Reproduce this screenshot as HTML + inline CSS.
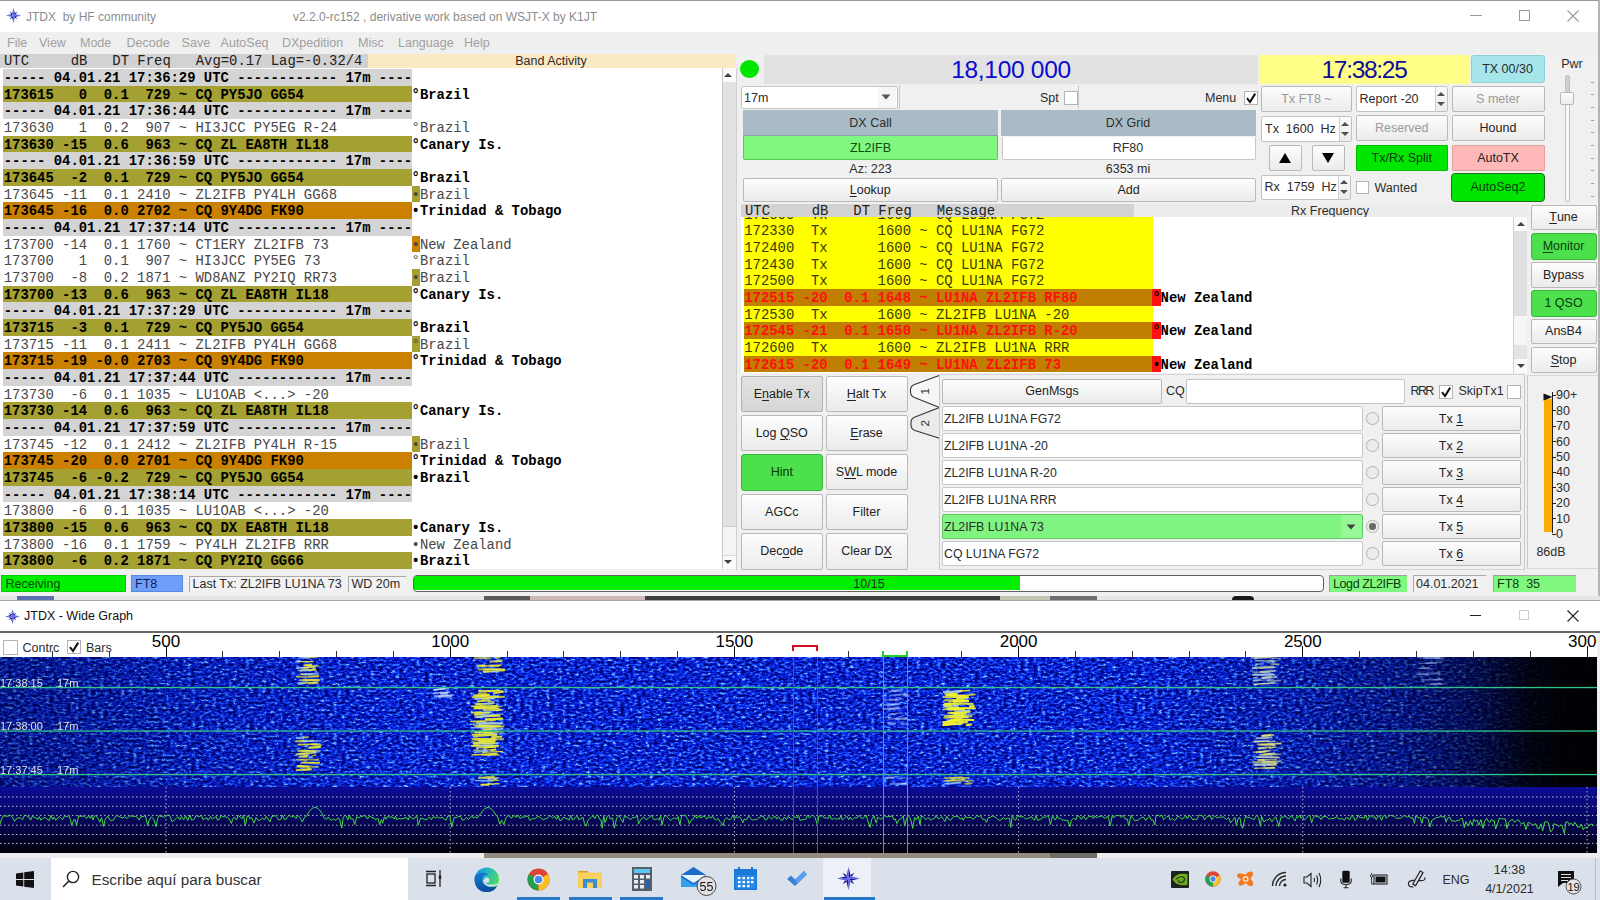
<!DOCTYPE html>
<html><head><meta charset="utf-8"><style>
*{margin:0;padding:0;box-sizing:border-box}
html,body{width:1600px;height:900px;overflow:hidden;background:#fff}
body{position:relative;font-family:"Liberation Sans",sans-serif;font-size:12px;color:#2c2c2c}
div{position:absolute}
.t{white-space:pre;line-height:1;transform:translateY(-50%)}
.tc{white-space:pre;line-height:1;transform:translate(-50%,-50%)}
.mono{font-family:"Liberation Mono",monospace;white-space:pre}
.btn{border:1px solid #b9b9b9;border-radius:2px;background:linear-gradient(#fcfcfc,#ececec);}
.btnl{display:flex;align-items:center;justify-content:center;white-space:pre;font-size:12.5px;color:#2c2c2c}
.edit{background:#fff;border:1px solid #c4c4c4;border-radius:2px}
.u{text-decoration:underline;text-underline-offset:2px}
.chk{background:#fff;border:1px solid #b8b8b8}
</style></head><body>
<div style="left:0px;top:0px;width:1600px;height:596px;background:#f0f0f0"></div>
<div style="left:0px;top:0px;width:1600px;height:1px;background:#9a9a9a"></div>
<div style="left:0px;top:1px;width:1598px;height:31px;background:#fff"></div>
<svg style="position:absolute;left:5.5px;top:8px" width="15" height="15" viewBox="0 0 20 20"><path d="M11.6 7.1 L15 5 L12.9 8.4 Z M12.9 11.6 L15 15 L11.6 12.9 Z M8.4 12.9 L5 15 L7.1 11.6 Z M7.1 8.4 L5 5 L8.4 7.1 Z" fill="#1212a0"/><path d="M10 0 L12 8 L10 10 Z M20 10 L12 12 L10 10 Z M10 20 L8 12 L10 10 Z M0 10 L8 8 L10 10 Z" fill="#1212a0"/><path d="M10 0 L8 8 L10 10 Z M20 10 L12 8 L10 10 Z M10 20 L12 12 L10 10 Z M0 10 L8 12 L10 10 Z" fill="#5a5ae6"/></svg>
<div class="t" style="left:26px;top:16.5px;font-size:12px;color:#8c8c8c">JTDX  by HF community</div>
<div class="t" style="left:293px;top:16.5px;font-size:12px;color:#8c8c8c">v2.2.0-rc152 , derivative work based on WSJT-X by K1JT</div>
<div style="left:1470px;top:15px;width:12px;height:1px;background:#999"></div>
<div style="left:1519px;top:10px;width:11px;height:11px;border:1px solid #999"></div>
<svg style="position:absolute;left:1567px;top:10px" width="12" height="12" viewBox="0 0 12 12"><path d="M0.5 0.5 L11.5 11.5 M11.5 0.5 L0.5 11.5" stroke="#999" stroke-width="1.1"/></svg>
<div style="left:1598px;top:0px;width:2px;height:596px;background:#b4b4b4"></div>
<div style="left:0px;top:32px;width:1598px;height:22px;background:#efefef"></div>
<div class="t" style="left:7px;top:42.5px;font-size:12.5px;color:#a0a0a0">File</div>
<div class="t" style="left:39px;top:42.5px;font-size:12.5px;color:#a0a0a0">View</div>
<div class="t" style="left:80px;top:42.5px;font-size:12.5px;color:#a0a0a0">Mode</div>
<div class="t" style="left:126.6px;top:42.5px;font-size:12.5px;color:#a0a0a0">Decode</div>
<div class="t" style="left:181.6px;top:42.5px;font-size:12.5px;color:#a0a0a0">Save</div>
<div class="t" style="left:220.6px;top:42.5px;font-size:12.5px;color:#a0a0a0">AutoSeq</div>
<div class="t" style="left:282px;top:42.5px;font-size:12.5px;color:#a0a0a0">DXpedition</div>
<div class="t" style="left:358px;top:42.5px;font-size:12.5px;color:#a0a0a0">Misc</div>
<div class="t" style="left:398px;top:42.5px;font-size:12.5px;color:#a0a0a0">Language</div>
<div class="t" style="left:464px;top:42.5px;font-size:12.5px;color:#a0a0a0">Help</div>
<div style="left:0px;top:54px;width:367.5px;height:13.5px;background:#d2d2d2"></div>
<div class="mono" style="left:4px;top:54px;height:14px;line-height:14px;font-size:13.9px;color:#202020">UTC     dB   DT Freq   Avg=0.17 Lag=-0.32/4</div>
<div style="left:367.5px;top:54px;width:368px;height:14px;background:#fbe9c4"></div>
<div class="t" style="left:551px;top:61px;font-size:12.5px;color:#2c2c2c;transform:translate(-50%,-50%)">Band Activity</div>
<div style="left:0px;top:67.5px;width:721.5px;height:501.5px;background:#fff"></div>
<div style="left:3px;top:69.1px;width:408.6px;height:16.67px;background:#d4d4d4"></div>
<div class="mono" style="left:3.75px;top:70.1px;height:16.67px;line-height:16.67px;font-size:13.9px;font-weight:bold;color:#000">----- 04.01.21 17:36:29 UTC ------------ 17m ----</div>
<div style="left:3px;top:85.77px;width:408.6px;height:16.67px;background:#a4a032"></div>
<div class="mono" style="left:3.75px;top:86.77px;height:16.67px;line-height:16.67px;font-size:13.9px;font-weight:bold;color:#000">173615   0  0.1  729 ~ CQ PY5JO GG54             </div>
<div class="mono" style="left:411.6px;top:86.77px;height:16.67px;line-height:16.67px;font-size:13.9px;font-weight:bold;color:#000">°Brazil</div>
<div style="left:3px;top:102.43px;width:408.6px;height:16.67px;background:#d4d4d4"></div>
<div class="mono" style="left:3.75px;top:103.43px;height:16.67px;line-height:16.67px;font-size:13.9px;font-weight:bold;color:#000">----- 04.01.21 17:36:44 UTC ------------ 17m ----</div>
<div class="mono" style="left:3.75px;top:120.1px;height:16.67px;line-height:16.67px;font-size:13.9px;font-weight:normal;color:#484848">173630   1  0.2  907 ~ HI3JCC PY5EG R-24         </div>
<div class="mono" style="left:411.6px;top:120.1px;height:16.67px;line-height:16.67px;font-size:13.9px;font-weight:normal;color:#484848">°Brazil</div>
<div style="left:3px;top:135.77px;width:408.6px;height:16.67px;background:#a4a032"></div>
<div class="mono" style="left:3.75px;top:136.77px;height:16.67px;line-height:16.67px;font-size:13.9px;font-weight:bold;color:#000">173630 -15  0.6  963 ~ CQ ZL EA8TH IL18          </div>
<div class="mono" style="left:411.6px;top:136.77px;height:16.67px;line-height:16.67px;font-size:13.9px;font-weight:bold;color:#000">°Canary Is.</div>
<div style="left:3px;top:152.43px;width:408.6px;height:16.67px;background:#d4d4d4"></div>
<div class="mono" style="left:3.75px;top:153.43px;height:16.67px;line-height:16.67px;font-size:13.9px;font-weight:bold;color:#000">----- 04.01.21 17:36:59 UTC ------------ 17m ----</div>
<div style="left:3px;top:169.1px;width:408.6px;height:16.67px;background:#a4a032"></div>
<div class="mono" style="left:3.75px;top:170.1px;height:16.67px;line-height:16.67px;font-size:13.9px;font-weight:bold;color:#000">173645  -2  0.1  729 ~ CQ PY5JO GG54             </div>
<div class="mono" style="left:411.6px;top:170.1px;height:16.67px;line-height:16.67px;font-size:13.9px;font-weight:bold;color:#000">°Brazil</div>
<div class="mono" style="left:3.75px;top:186.77px;height:16.67px;line-height:16.67px;font-size:13.9px;font-weight:normal;color:#484848">173645 -11  0.1 2410 ~ ZL2IFB PY4LH GG68         </div>
<div style="left:411.6px;top:185.77px;width:8.33px;height:16.67px;background:#a4a032"></div>
<div class="mono" style="left:411.6px;top:186.77px;height:16.67px;line-height:16.67px;font-size:13.9px;font-weight:normal;color:#484848">•Brazil</div>
<div style="left:3px;top:202.43px;width:408.6px;height:16.67px;background:#cc8000"></div>
<div class="mono" style="left:3.75px;top:203.43px;height:16.67px;line-height:16.67px;font-size:13.9px;font-weight:bold;color:#000">173645 -16  0.0 2702 ~ CQ 9Y4DG FK90             </div>
<div class="mono" style="left:411.6px;top:203.43px;height:16.67px;line-height:16.67px;font-size:13.9px;font-weight:bold;color:#000">•Trinidad &amp; Tobago</div>
<div style="left:3px;top:219.1px;width:408.6px;height:16.67px;background:#d4d4d4"></div>
<div class="mono" style="left:3.75px;top:220.1px;height:16.67px;line-height:16.67px;font-size:13.9px;font-weight:bold;color:#000">----- 04.01.21 17:37:14 UTC ------------ 17m ----</div>
<div class="mono" style="left:3.75px;top:236.77px;height:16.67px;line-height:16.67px;font-size:13.9px;font-weight:normal;color:#484848">173700 -14  0.1 1760 ~ CT1ERY ZL2IFB 73          </div>
<div style="left:411.6px;top:235.77px;width:8.33px;height:16.67px;background:#cc8000"></div>
<div class="mono" style="left:411.6px;top:236.77px;height:16.67px;line-height:16.67px;font-size:13.9px;font-weight:normal;color:#484848">•New Zealand</div>
<div class="mono" style="left:3.75px;top:253.43px;height:16.67px;line-height:16.67px;font-size:13.9px;font-weight:normal;color:#484848">173700   1  0.1  907 ~ HI3JCC PY5EG 73           </div>
<div class="mono" style="left:411.6px;top:253.43px;height:16.67px;line-height:16.67px;font-size:13.9px;font-weight:normal;color:#484848">°Brazil</div>
<div class="mono" style="left:3.75px;top:270.1px;height:16.67px;line-height:16.67px;font-size:13.9px;font-weight:normal;color:#484848">173700  -8  0.2 1871 ~ WD8ANZ PY2IQ RR73         </div>
<div style="left:411.6px;top:269.1px;width:8.33px;height:16.67px;background:#a4a032"></div>
<div class="mono" style="left:411.6px;top:270.1px;height:16.67px;line-height:16.67px;font-size:13.9px;font-weight:normal;color:#484848">•Brazil</div>
<div style="left:3px;top:285.77px;width:408.6px;height:16.67px;background:#a4a032"></div>
<div class="mono" style="left:3.75px;top:286.77px;height:16.67px;line-height:16.67px;font-size:13.9px;font-weight:bold;color:#000">173700 -13  0.6  963 ~ CQ ZL EA8TH IL18          </div>
<div class="mono" style="left:411.6px;top:286.77px;height:16.67px;line-height:16.67px;font-size:13.9px;font-weight:bold;color:#000">°Canary Is.</div>
<div style="left:3px;top:302.43px;width:408.6px;height:16.67px;background:#d4d4d4"></div>
<div class="mono" style="left:3.75px;top:303.43px;height:16.67px;line-height:16.67px;font-size:13.9px;font-weight:bold;color:#000">----- 04.01.21 17:37:29 UTC ------------ 17m ----</div>
<div style="left:3px;top:319.1px;width:408.6px;height:16.67px;background:#a4a032"></div>
<div class="mono" style="left:3.75px;top:320.1px;height:16.67px;line-height:16.67px;font-size:13.9px;font-weight:bold;color:#000">173715  -3  0.1  729 ~ CQ PY5JO GG54             </div>
<div class="mono" style="left:411.6px;top:320.1px;height:16.67px;line-height:16.67px;font-size:13.9px;font-weight:bold;color:#000">°Brazil</div>
<div class="mono" style="left:3.75px;top:336.77px;height:16.67px;line-height:16.67px;font-size:13.9px;font-weight:normal;color:#484848">173715 -11  0.1 2411 ~ ZL2IFB PY4LH GG68         </div>
<div style="left:411.6px;top:335.77px;width:8.33px;height:16.67px;background:#a4a032"></div>
<div class="mono" style="left:411.6px;top:336.77px;height:16.67px;line-height:16.67px;font-size:13.9px;font-weight:normal;color:#484848">°Brazil</div>
<div style="left:3px;top:352.43px;width:408.6px;height:16.67px;background:#cc8000"></div>
<div class="mono" style="left:3.75px;top:353.43px;height:16.67px;line-height:16.67px;font-size:13.9px;font-weight:bold;color:#000">173715 -19 -0.0 2703 ~ CQ 9Y4DG FK90             </div>
<div class="mono" style="left:411.6px;top:353.43px;height:16.67px;line-height:16.67px;font-size:13.9px;font-weight:bold;color:#000">°Trinidad &amp; Tobago</div>
<div style="left:3px;top:369.1px;width:408.6px;height:16.67px;background:#d4d4d4"></div>
<div class="mono" style="left:3.75px;top:370.1px;height:16.67px;line-height:16.67px;font-size:13.9px;font-weight:bold;color:#000">----- 04.01.21 17:37:44 UTC ------------ 17m ----</div>
<div class="mono" style="left:3.75px;top:386.77px;height:16.67px;line-height:16.67px;font-size:13.9px;font-weight:normal;color:#484848">173730  -6  0.1 1035 ~ LU1OAB &lt;...&gt; -20          </div>
<div style="left:3px;top:402.43px;width:408.6px;height:16.67px;background:#a4a032"></div>
<div class="mono" style="left:3.75px;top:403.43px;height:16.67px;line-height:16.67px;font-size:13.9px;font-weight:bold;color:#000">173730 -14  0.6  963 ~ CQ ZL EA8TH IL18          </div>
<div class="mono" style="left:411.6px;top:403.43px;height:16.67px;line-height:16.67px;font-size:13.9px;font-weight:bold;color:#000">°Canary Is.</div>
<div style="left:3px;top:419.1px;width:408.6px;height:16.67px;background:#d4d4d4"></div>
<div class="mono" style="left:3.75px;top:420.1px;height:16.67px;line-height:16.67px;font-size:13.9px;font-weight:bold;color:#000">----- 04.01.21 17:37:59 UTC ------------ 17m ----</div>
<div class="mono" style="left:3.75px;top:436.77px;height:16.67px;line-height:16.67px;font-size:13.9px;font-weight:normal;color:#484848">173745 -12  0.1 2412 ~ ZL2IFB PY4LH R-15         </div>
<div style="left:411.6px;top:435.77px;width:8.33px;height:16.67px;background:#a4a032"></div>
<div class="mono" style="left:411.6px;top:436.77px;height:16.67px;line-height:16.67px;font-size:13.9px;font-weight:normal;color:#484848">•Brazil</div>
<div style="left:3px;top:452.43px;width:408.6px;height:16.67px;background:#cc8000"></div>
<div class="mono" style="left:3.75px;top:453.43px;height:16.67px;line-height:16.67px;font-size:13.9px;font-weight:bold;color:#000">173745 -20  0.0 2701 ~ CQ 9Y4DG FK90             </div>
<div class="mono" style="left:411.6px;top:453.43px;height:16.67px;line-height:16.67px;font-size:13.9px;font-weight:bold;color:#000">°Trinidad &amp; Tobago</div>
<div style="left:3px;top:469.1px;width:408.6px;height:16.67px;background:#a4a032"></div>
<div class="mono" style="left:3.75px;top:470.1px;height:16.67px;line-height:16.67px;font-size:13.9px;font-weight:bold;color:#000">173745  -6 -0.2  729 ~ CQ PY5JO GG54             </div>
<div class="mono" style="left:411.6px;top:470.1px;height:16.67px;line-height:16.67px;font-size:13.9px;font-weight:bold;color:#000">•Brazil</div>
<div style="left:3px;top:485.77px;width:408.6px;height:16.67px;background:#d4d4d4"></div>
<div class="mono" style="left:3.75px;top:486.77px;height:16.67px;line-height:16.67px;font-size:13.9px;font-weight:bold;color:#000">----- 04.01.21 17:38:14 UTC ------------ 17m ----</div>
<div class="mono" style="left:3.75px;top:503.43px;height:16.67px;line-height:16.67px;font-size:13.9px;font-weight:normal;color:#484848">173800  -6  0.1 1035 ~ LU1OAB &lt;...&gt; -20          </div>
<div style="left:3px;top:519.1px;width:408.6px;height:16.67px;background:#a4a032"></div>
<div class="mono" style="left:3.75px;top:520.1px;height:16.67px;line-height:16.67px;font-size:13.9px;font-weight:bold;color:#000">173800 -15  0.6  963 ~ CQ DX EA8TH IL18          </div>
<div class="mono" style="left:411.6px;top:520.1px;height:16.67px;line-height:16.67px;font-size:13.9px;font-weight:bold;color:#000">•Canary Is.</div>
<div class="mono" style="left:3.75px;top:536.77px;height:16.67px;line-height:16.67px;font-size:13.9px;font-weight:normal;color:#484848">173800 -16  0.1 1759 ~ PY4LH ZL2IFB RRR          </div>
<div class="mono" style="left:411.6px;top:536.77px;height:16.67px;line-height:16.67px;font-size:13.9px;font-weight:normal;color:#484848">•New Zealand</div>
<div style="left:3px;top:552.43px;width:408.6px;height:16.67px;background:#a4a032"></div>
<div class="mono" style="left:3.75px;top:553.43px;height:16.67px;line-height:16.67px;font-size:13.9px;font-weight:bold;color:#000">173800  -6  0.2 1871 ~ CQ PY2IQ GG66             </div>
<div class="mono" style="left:411.6px;top:553.43px;height:16.67px;line-height:16.67px;font-size:13.9px;font-weight:bold;color:#000">•Brazil</div>
<div style="left:721.5px;top:68px;width:14px;height:501px;background:#e8e8e8;border-left:1px solid #c8c8c8"></div>
<div style="left:722.5px;top:68px;width:13px;height:14px;background:#fafafa"></div>
<div style="left:722.5px;top:82px;width:13px;height:445px;background:#e2e2e2;border-bottom:1px solid #d0d0d0"></div>
<div style="left:722.5px;top:527px;width:13px;height:28px;background:#f4f4f4"></div>
<div style="left:722.5px;top:555px;width:13px;height:14px;background:#fafafa;border-top:1px solid #d8d8d8"></div>
<svg style="position:absolute;left:723px;top:71px" width="10" height="8" viewBox="0 0 10 8"><path d="M1 6 L5 2 L9 6 Z" fill="#444"/></svg>
<svg style="position:absolute;left:723px;top:558px" width="10" height="8" viewBox="0 0 10 8"><path d="M1 2 L5 6 L9 2 Z" fill="#444"/></svg>
<div style="left:735.5px;top:68px;width:1px;height:503px;background:#d0d0d0"></div>
<div style="left:740px;top:60px;width:18.5px;height:18px;background:#00e600;border-radius:50%"></div>
<div style="left:764px;top:54.5px;width:494px;height:29px;background:#e2e2e2"></div>
<div class="t" style="left:1011px;top:70px;font-size:24.5px;color:#0a0ad0;letter-spacing:-0.3px;transform:translate(-50%,-50%)">18,100 000</div>
<div style="left:1260px;top:54.5px;width:208.5px;height:29.5px;background:#ffff88"></div>
<div class="t" style="left:1364px;top:70px;font-size:24.5px;color:#0d0d99;letter-spacing:-1.3px;transform:translate(-50%,-50%)">17:38:25</div>
<div style="left:1470.5px;top:55px;width:74px;height:28px;background:#a6e6ea;border:1px solid #8ccfd6;border-radius:3px;display:flex;align-items:center;justify-content:center;font-size:12.5px;color:#2c2c2c">TX 00/30</div>
<div class="t" style="left:1572px;top:63.5px;font-size:12.5px;color:#2c2c2c;transform:translate(-50%,-50%)">Pwr</div>
<div style="left:1565px;top:75px;width:5px;height:127px;background:#fafafa;border:1px solid #c0c0c0;border-radius:2px"></div>
<div style="left:1566px;top:76px;width:3px;height:16px;background:#cfcfcf"></div>
<div style="left:1560px;top:91.5px;width:14px;height:13px;background:linear-gradient(#fdfdfd,#ececec);border:1px solid #b8b8b8;border-radius:2px"></div>
<div style="left:1591px;top:81.8px;width:3px;height:1px;background:#a0a0a0"></div>
<div style="left:1591px;top:94.45px;width:3px;height:1px;background:#a0a0a0"></div>
<div style="left:1591px;top:107.1px;width:3px;height:1px;background:#a0a0a0"></div>
<div style="left:1591px;top:119.75px;width:3px;height:1px;background:#a0a0a0"></div>
<div style="left:1591px;top:132.4px;width:3px;height:1px;background:#a0a0a0"></div>
<div style="left:1591px;top:145.05px;width:3px;height:1px;background:#a0a0a0"></div>
<div style="left:1591px;top:157.7px;width:3px;height:1px;background:#a0a0a0"></div>
<div style="left:1591px;top:170.35px;width:3px;height:1px;background:#a0a0a0"></div>
<div style="left:1591px;top:183.0px;width:3px;height:1px;background:#a0a0a0"></div>
<div style="left:1591px;top:195.65px;width:3px;height:1px;background:#a0a0a0"></div>
<div style="left:741px;top:86px;width:156.5px;height:22.5px;background:#fff;border:1px solid #c4c4c4;border-radius:2px"></div>
<div style="left:878px;top:87px;width:18px;height:20.5px;background:#f6f6f6"></div>
<div class="t" style="left:744px;top:97.5px;font-size:12.5px;color:#2c2c2c">17m</div>
<svg style="position:absolute;left:881px;top:94px" width="10" height="6" viewBox="0 0 10 6"><path d="M0.5 0.5 L9.5 0.5 L5 5.5 Z" fill="#555"/></svg>
<div style="left:899px;top:85px;width:180px;height:24px;border-left:1px solid #c8c8c8;border-right:1px solid #c8c8c8"></div>
<div class="t" style="left:1040px;top:97.5px;font-size:12.5px;color:#2c2c2c">Spt</div>
<div style="left:1064px;top:90.5px;width:14px;height:14px;background:#fff;border:1px solid #b4b4b4"></div>
<div class="t" style="left:1205px;top:97.5px;font-size:12.5px;color:#2c2c2c">Menu</div>
<div style="left:1244px;top:90.5px;width:14px;height:14px;background:#fff;border:1px solid #b4b4b4"></div>
<svg style="position:absolute;left:1244px;top:90.5px" width="14" height="14" viewBox="0 0 14 14"><path d="M3 7.2 L6 11 L11.2 2.6" fill="none" stroke="#111" stroke-width="2"/></svg>
<div style="left:743px;top:110px;width:255px;height:25.5px;background:#a9bcc6;border-bottom:1px solid #8aa0aa"></div>
<div class="t" style="left:870.5px;top:122.5px;font-size:12.5px;color:#2c2c2c;transform:translate(-50%,-50%)">DX Call</div>
<div style="left:1001px;top:110px;width:255px;height:26px;background:#a9bcc6"></div>
<div class="t" style="left:1128px;top:122.5px;font-size:12.5px;color:#2c2c2c;transform:translate(-50%,-50%)">DX Grid</div>
<div style="left:743px;top:135.5px;width:255px;height:24px;background:#80f880;border:1px solid #5cc85c;border-top:none;border-radius:0 0 2px 2px"></div>
<div class="t" style="left:870.5px;top:148px;font-size:12.5px;color:#0c4c0c;transform:translate(-50%,-50%)">ZL2IFB</div>
<div style="left:1001.5px;top:136.5px;width:254.5px;height:23px;background:#fff;border:1px solid #c8c8c8;border-top:none;border-radius:0 0 2px 2px"></div>
<div class="t" style="left:1128px;top:148px;font-size:12.5px;color:#2c2c2c;transform:translate(-50%,-50%)">RF80</div>
<div class="t" style="left:870.5px;top:169px;font-size:12.5px;color:#2c2c2c;transform:translate(-50%,-50%)">Az: 223</div>
<div class="t" style="left:1128px;top:169px;font-size:12.5px;color:#2c2c2c;transform:translate(-50%,-50%)">6353 mi</div>
<div style="left:742.5px;top:177.5px;width:255.5px;height:24.5px;border:1px solid #b9b9b9;border-radius:2px;background:linear-gradient(#fdfdfd,#ebebeb);display:flex;align-items:center;justify-content:center;white-space:pre;font-size:12.5px;color:#222;"><span class="u">L</span>ookup</div>
<div style="left:1001px;top:177.5px;width:255px;height:24.5px;border:1px solid #b9b9b9;border-radius:2px;background:linear-gradient(#fdfdfd,#ebebeb);display:flex;align-items:center;justify-content:center;white-space:pre;font-size:12.5px;color:#222;">Add</div>
<div style="left:1261px;top:85.5px;width:91px;height:26.5px;border:1px solid #b9b9b9;border-radius:2px;background:linear-gradient(#fdfdfd,#ebebeb);display:flex;align-items:center;justify-content:center;white-space:pre;font-size:12.5px;color:#9a9a9a;">Tx FT8 ~</div>
<div style="left:1355.5px;top:85.5px;width:92.5px;height:26px;background:#fff;border:1px solid #c2c2c2;border-radius:2px"></div>
<div class="t" style="left:1359.5px;top:98.5px;font-size:12.5px;color:#2c2c2c">Report -20</div>
<div style="left:1434.5px;top:86.5px;width:12.5px;height:24px;background:linear-gradient(#fafafa,#ececec);border-left:1px solid #cfcfcf"></div>
<svg style="position:absolute;left:1436.25px;top:90.5px" width="10" height="16" viewBox="0 0 10 16"><path d="M1 5 L5 1 L9 5 Z" fill="#505050"/><path d="M1 11 L5 15 L9 11 Z" fill="#505050"/></svg>
<div style="left:1451.5px;top:85.5px;width:93px;height:26px;border:1px solid #b9b9b9;border-radius:2px;background:linear-gradient(#fdfdfd,#ebebeb);display:flex;align-items:center;justify-content:center;white-space:pre;font-size:12.5px;color:#9a9a9a;">S meter</div>
<div style="left:1261px;top:115.5px;width:91px;height:26px;background:#fff;border:1px solid #c2c2c2;border-radius:2px"></div>
<div class="t" style="left:1265px;top:128.5px;font-size:12.5px;color:#2c2c2c">Tx  1600  Hz</div>
<div style="left:1338.5px;top:116.5px;width:12.5px;height:24px;background:linear-gradient(#fafafa,#ececec);border-left:1px solid #cfcfcf"></div>
<svg style="position:absolute;left:1340.25px;top:120.5px" width="10" height="16" viewBox="0 0 10 16"><path d="M1 5 L5 1 L9 5 Z" fill="#505050"/><path d="M1 11 L5 15 L9 11 Z" fill="#505050"/></svg>
<div style="left:1355.5px;top:115px;width:92.5px;height:26px;border:1px solid #b9b9b9;border-radius:2px;background:linear-gradient(#fdfdfd,#ebebeb);display:flex;align-items:center;justify-content:center;white-space:pre;font-size:12.5px;color:#9a9a9a;">Reserved</div>
<div style="left:1451.5px;top:115px;width:93px;height:26px;border:1px solid #b9b9b9;border-radius:2px;background:linear-gradient(#fdfdfd,#ebebeb);display:flex;align-items:center;justify-content:center;white-space:pre;font-size:12.5px;color:#222;">Hound</div>
<div style="left:1268.5px;top:145px;width:33px;height:26px;border:1px solid #b9b9b9;border-radius:2px;background:linear-gradient(#fdfdfd,#ebebeb);display:flex;align-items:center;justify-content:center;white-space:pre;font-size:12.5px;color:#222;"><svg width="14" height="12" viewBox="0 0 14 12"><path d="M1 11 L7 1 L13 11 Z" fill="#000"/></svg></div>
<div style="left:1312px;top:145px;width:32.5px;height:26px;border:1px solid #b9b9b9;border-radius:2px;background:linear-gradient(#fdfdfd,#ebebeb);display:flex;align-items:center;justify-content:center;white-space:pre;font-size:12.5px;color:#222;"><svg width="14" height="12" viewBox="0 0 14 12"><path d="M1 1 L7 11 L13 1 Z" fill="#000"/></svg></div>
<div style="left:1355.5px;top:144.5px;width:92.5px;height:26.5px;border:1px solid #00c000;border-radius:1px;background:#00e600;display:flex;align-items:center;justify-content:center;white-space:pre;font-size:12.5px;color:#0a3a0a;">Tx/Rx Split</div>
<div style="left:1451.5px;top:144.5px;width:93px;height:26.5px;border:1px solid #e0a0a0;border-radius:1px;background:#ffb8b8;display:flex;align-items:center;justify-content:center;white-space:pre;font-size:12.5px;color:#222;">AutoTX</div>
<div style="left:1260.5px;top:174.5px;width:90.5px;height:25.5px;background:#fff;border:1px solid #c2c2c2;border-radius:2px"></div>
<div class="t" style="left:1264.5px;top:187.25px;font-size:12.5px;color:#2c2c2c">Rx  1759  Hz</div>
<div style="left:1337.5px;top:175.5px;width:12.5px;height:23.5px;background:linear-gradient(#fafafa,#ececec);border-left:1px solid #cfcfcf"></div>
<svg style="position:absolute;left:1339.25px;top:179.25px" width="10" height="16" viewBox="0 0 10 16"><path d="M1 5 L5 1 L9 5 Z" fill="#505050"/><path d="M1 11 L5 15 L9 11 Z" fill="#505050"/></svg>
<div style="left:1355.5px;top:180.5px;width:13.5px;height:13.5px;background:#fff;border:1px solid #b4b4b4"></div>
<div class="t" style="left:1374.5px;top:187.5px;font-size:12.5px;color:#2c2c2c">Wanted</div>
<div style="left:1451px;top:173px;width:94px;height:28.5px;border:1px solid #1f6f1f;border-radius:4px;background:#00e600;display:flex;align-items:center;justify-content:center;white-space:pre;font-size:12.5px;color:#0a3a0a;">AutoSeq2</div>
<div style="left:740.5px;top:204px;width:393px;height:13px;background:#d2d2d2"></div>
<div style="left:1133.5px;top:204px;width:393.5px;height:13px;background:#ececec"></div>
<div class="mono" style="left:745px;top:203.5px;height:14px;line-height:14px;font-size:13.9px;color:#202020">UTC     dB   DT Freq   Message</div>
<div class="t" style="left:1330px;top:210.5px;font-size:12.5px;color:#2c2c2c;transform:translate(-50%,-50%)">Rx Frequency</div>
<div style="left:740.5px;top:217px;width:772.5px;height:156px;background:#fff;overflow:hidden"><div style="left:3.25px;top:-11.4px;width:408.75px;height:16.67px;background:#ffff00"></div>
<div class="mono" style="left:3.75px;top:-10.4px;height:16.67px;line-height:16.67px;font-size:13.9px;color:#3a3a00">172300  Tx      1600 ~ CQ LU1NA FG72             </div>
<div style="left:3.25px;top:5.27px;width:408.75px;height:16.67px;background:#ffff00"></div>
<div class="mono" style="left:3.75px;top:6.27px;height:16.67px;line-height:16.67px;font-size:13.9px;color:#3a3a00">172330  Tx      1600 ~ CQ LU1NA FG72             </div>
<div style="left:3.25px;top:21.93px;width:408.75px;height:16.67px;background:#ffff00"></div>
<div class="mono" style="left:3.75px;top:22.93px;height:16.67px;line-height:16.67px;font-size:13.9px;color:#3a3a00">172400  Tx      1600 ~ CQ LU1NA FG72             </div>
<div style="left:3.25px;top:38.6px;width:408.75px;height:16.67px;background:#ffff00"></div>
<div class="mono" style="left:3.75px;top:39.6px;height:16.67px;line-height:16.67px;font-size:13.9px;color:#3a3a00">172430  Tx      1600 ~ CQ LU1NA FG72             </div>
<div style="left:3.25px;top:55.27px;width:408.75px;height:16.67px;background:#ffff00"></div>
<div class="mono" style="left:3.75px;top:56.27px;height:16.67px;line-height:16.67px;font-size:13.9px;color:#3a3a00">172500  Tx      1600 ~ CQ LU1NA FG72             </div>
<div style="left:3.25px;top:71.93px;width:408.75px;height:16.67px;background:#c07f00"></div>
<div class="mono" style="left:3.75px;top:72.93px;height:16.67px;line-height:16.67px;font-size:13.9px;font-weight:bold;color:#ff1010">172515 -20  0.1 1648 ~ LU1NA ZL2IFB RF80         </div>
<div style="left:411.75px;top:71.93px;width:8.33px;height:16.67px;background:#ff1010"></div>
<div class="mono" style="left:411.75px;top:72.93px;height:16.67px;line-height:16.67px;font-size:13.9px;font-weight:bold;color:#000">°New Zealand</div>
<div style="left:3.25px;top:88.6px;width:408.75px;height:16.67px;background:#ffff00"></div>
<div class="mono" style="left:3.75px;top:89.6px;height:16.67px;line-height:16.67px;font-size:13.9px;color:#3a3a00">172530  Tx      1600 ~ ZL2IFB LU1NA -20          </div>
<div style="left:3.25px;top:105.27px;width:408.75px;height:16.67px;background:#c07f00"></div>
<div class="mono" style="left:3.75px;top:106.27px;height:16.67px;line-height:16.67px;font-size:13.9px;font-weight:bold;color:#ff1010">172545 -21  0.1 1650 ~ LU1NA ZL2IFB R-20         </div>
<div style="left:411.75px;top:105.27px;width:8.33px;height:16.67px;background:#ff1010"></div>
<div class="mono" style="left:411.75px;top:106.27px;height:16.67px;line-height:16.67px;font-size:13.9px;font-weight:bold;color:#000">°New Zealand</div>
<div style="left:3.25px;top:121.93px;width:408.75px;height:16.67px;background:#ffff00"></div>
<div class="mono" style="left:3.75px;top:122.93px;height:16.67px;line-height:16.67px;font-size:13.9px;color:#3a3a00">172600  Tx      1600 ~ ZL2IFB LU1NA RRR          </div>
<div style="left:3.25px;top:138.6px;width:408.75px;height:16.67px;background:#c07f00"></div>
<div class="mono" style="left:3.75px;top:139.6px;height:16.67px;line-height:16.67px;font-size:13.9px;font-weight:bold;color:#ff1010">172615 -20  0.1 1649 ~ LU1NA ZL2IFB 73           </div>
<div style="left:411.75px;top:138.6px;width:8.33px;height:16.67px;background:#ff1010"></div>
<div class="mono" style="left:411.75px;top:139.6px;height:16.67px;line-height:16.67px;font-size:13.9px;font-weight:bold;color:#000">•New Zealand</div>
</div>
<div style="left:1513px;top:217px;width:14px;height:156px;background:#ececec;border-left:1px solid #cfcfcf"></div>
<div style="left:1514px;top:217px;width:13px;height:14px;background:#fafafa"></div>
<div style="left:1514px;top:231px;width:13px;height:85px;background:#e0e0e0"></div>
<div style="left:1514px;top:316px;width:13px;height:29px;background:#f6f6f6"></div>
<div style="left:1514px;top:345px;width:13px;height:14px;background:#e4e4e4"></div>
<div style="left:1514px;top:359px;width:13px;height:14px;background:#fafafa"></div>
<svg style="position:absolute;left:1515.5px;top:220px" width="10" height="8" viewBox="0 0 10 8"><path d="M1 6 L5 2 L9 6 Z" fill="#444"/></svg>
<svg style="position:absolute;left:1515.5px;top:362px" width="10" height="8" viewBox="0 0 10 8"><path d="M1 2 L5 6 L9 2 Z" fill="#444"/></svg>
<div style="left:1530.5px;top:204.5px;width:66px;height:25.5px;border:1px solid #b9b9b9;border-radius:2px;background:linear-gradient(#fdfdfd,#ebebeb);display:flex;align-items:center;justify-content:center;white-space:pre;font-size:12.5px;color:#222;"><span class="u">T</span>une</div>
<div style="left:1530.5px;top:233px;width:66px;height:26.5px;border:1px solid #3ab83a;border-radius:3px;background:#4ce04c;display:flex;align-items:center;justify-content:center;white-space:pre;font-size:12.5px;color:#0a3a0a;"><span class="u">M</span>onitor</div>
<div style="left:1530.5px;top:261.5px;width:66px;height:26px;border:1px solid #b9b9b9;border-radius:2px;background:linear-gradient(#fdfdfd,#ebebeb);display:flex;align-items:center;justify-content:center;white-space:pre;font-size:12.5px;color:#222;">Bypass</div>
<div style="left:1530.5px;top:289.5px;width:66px;height:27px;border:1px solid #3ab83a;border-radius:3px;background:#4ce04c;display:flex;align-items:center;justify-content:center;white-space:pre;font-size:12.5px;color:#0a3a0a;">1 QSO</div>
<div style="left:1530.5px;top:318.5px;width:66px;height:25.5px;border:1px solid #b9b9b9;border-radius:2px;background:linear-gradient(#fdfdfd,#ebebeb);display:flex;align-items:center;justify-content:center;white-space:pre;font-size:12.5px;color:#222;">AnsB4</div>
<div style="left:1530.5px;top:346.5px;width:66px;height:26px;border:1px solid #b9b9b9;border-radius:2px;background:linear-gradient(#fdfdfd,#ebebeb);display:flex;align-items:center;justify-content:center;white-space:pre;font-size:12.5px;color:#222;"><span class="u">S</span>top</div>
<div style="left:740.5px;top:375.5px;width:82.5px;height:36.5px;border:1px solid #b0b0b0;border-radius:2px;background:linear-gradient(#e2e2e2,#d6d6d6);display:flex;align-items:center;justify-content:center;white-space:pre;font-size:12.5px;color:#222;">E<span class="u">n</span>able Tx</div>
<div style="left:825.5px;top:375.5px;width:82px;height:36.5px;border:1px solid #b9b9b9;border-radius:2px;background:linear-gradient(#fdfdfd,#ebebeb);display:flex;align-items:center;justify-content:center;white-space:pre;font-size:12.5px;color:#222;"><span class="u">H</span>alt Tx</div>
<div style="left:740.5px;top:414.5px;width:82.5px;height:36.5px;border:1px solid #b9b9b9;border-radius:2px;background:linear-gradient(#fdfdfd,#ebebeb);display:flex;align-items:center;justify-content:center;white-space:pre;font-size:12.5px;color:#222;">Log <span class="u">Q</span>SO</div>
<div style="left:825.5px;top:414.5px;width:82px;height:36.5px;border:1px solid #b9b9b9;border-radius:2px;background:linear-gradient(#fdfdfd,#ebebeb);display:flex;align-items:center;justify-content:center;white-space:pre;font-size:12.5px;color:#222;"><span class="u">E</span>rase</div>
<div style="left:740.5px;top:453.5px;width:82.5px;height:37.5px;border:1px solid #3ab83a;border-radius:3px;background:#4ce04c;display:flex;align-items:center;justify-content:center;white-space:pre;font-size:12.5px;color:#0a3a0a;">Hint</div>
<div style="left:825.5px;top:453.5px;width:82px;height:36.5px;border:1px solid #b9b9b9;border-radius:2px;background:linear-gradient(#fdfdfd,#ebebeb);display:flex;align-items:center;justify-content:center;white-space:pre;font-size:12.5px;color:#222;">S<span class="u">W</span>L mode</div>
<div style="left:740.5px;top:493.5px;width:82.5px;height:36.5px;border:1px solid #b9b9b9;border-radius:2px;background:linear-gradient(#fdfdfd,#ebebeb);display:flex;align-items:center;justify-content:center;white-space:pre;font-size:12.5px;color:#222;">AGCc</div>
<div style="left:825.5px;top:493.5px;width:82px;height:36.5px;border:1px solid #b9b9b9;border-radius:2px;background:linear-gradient(#fdfdfd,#ebebeb);display:flex;align-items:center;justify-content:center;white-space:pre;font-size:12.5px;color:#222;">Filter</div>
<div style="left:740.5px;top:533px;width:82.5px;height:36.5px;border:1px solid #b9b9b9;border-radius:2px;background:linear-gradient(#fdfdfd,#ebebeb);display:flex;align-items:center;justify-content:center;white-space:pre;font-size:12.5px;color:#222;">Dec<span class="u">o</span>de</div>
<div style="left:825.5px;top:533px;width:82px;height:36.5px;border:1px solid #b9b9b9;border-radius:2px;background:linear-gradient(#fdfdfd,#ebebeb);display:flex;align-items:center;justify-content:center;white-space:pre;font-size:12.5px;color:#222;">Clear D<span class="u">X</span></div>
<svg style="position:absolute;left:908px;top:373px" width="34" height="70" viewBox="0 0 34 70"><path d="M31.2 2.4 L6.5 11.5 Q2.5 13 2.5 17 L2.5 19 Q2.5 23 6.5 24.5 L31.5 34.5 Z" fill="#f6f6f6"/><path d="M31.5 34.5 L7 44 Q3 45.5 3 49.5 L3 52 Q3 56 7 57.5 L31.5 65.3 Z" fill="#ebebeb"/><path d="M31.2 2.4 L6.5 11.5 Q2.5 13 2.5 17 L2.5 19 Q2.5 23 6.5 24.5 L31.5 34.5" fill="none" stroke="#333" stroke-width="1.1"/><path d="M31.5 34.5 L7 44 Q3 45.5 3 49.5 L3 52 Q3 56 7 57.5 L31.5 65.3" fill="none" stroke="#333" stroke-width="1.1"/><text x="17" y="18.3" font-family="Liberation Sans" font-size="11.5" fill="#2c2c2c" transform="rotate(-90 17 18.3)" text-anchor="middle" dominant-baseline="central">1</text><text x="17" y="50.3" font-family="Liberation Sans" font-size="11.5" fill="#2c2c2c" transform="rotate(-90 17 50.3)" text-anchor="middle" dominant-baseline="central">2</text></svg>
<div style="left:938.5px;top:374px;width:586px;height:196px;border-left:1px solid #c8c8c8;border-right:1px solid #c8c8c8;border-top:1px solid #d4d4d4;border-bottom:1px solid #d4d4d4"></div>
<div style="left:942px;top:378.5px;width:220px;height:25px;border:1px solid #b9b9b9;border-radius:2px;background:linear-gradient(#fdfdfd,#ebebeb);display:flex;align-items:center;justify-content:center;white-space:pre;font-size:12.5px;color:#222;">GenMsgs</div>
<div class="t" style="left:1166px;top:391px;font-size:12.5px;color:#2c2c2c">CQ</div>
<div style="left:1186px;top:378.5px;width:218.5px;height:25px;background:#fff;border:1px solid #c4c4c4;border-radius:2px"></div>
<div class="t" style="left:1410.5px;top:391px;font-size:12.5px;color:#2c2c2c;letter-spacing:-1.6px">RRR</div>
<div style="left:1438.5px;top:384.5px;width:14px;height:14px;background:#fff;border:1px solid #b4b4b4"></div>
<svg style="position:absolute;left:1438.5px;top:384.5px" width="14" height="14" viewBox="0 0 14 14"><path d="M3 7.2 L6 11 L11.2 2.6" fill="none" stroke="#111" stroke-width="2"/></svg>
<div class="t" style="left:1458.5px;top:391px;font-size:12.5px;color:#2c2c2c">SkipTx1</div>
<div style="left:1506.5px;top:384.5px;width:14px;height:14px;background:#fff;border:1px solid #b4b4b4"></div>
<div style="left:942px;top:405.75px;width:420.5px;height:25.5px;background:#fff;border:1px solid #c8c8c8;border-radius:2px"></div>
<div class="t" style="left:944px;top:418.75px;font-size:12.3px;color:#2c2c2c">ZL2IFB LU1NA FG72</div>
<div style="left:1366px;top:412.25px;width:12.5px;height:12.5px;background:#ececec;border:1px solid #b4b4b4;border-radius:50%"></div>
<div style="left:1381.5px;top:405.75px;width:139px;height:25.5px;border:1px solid #b9b9b9;border-radius:2px;background:linear-gradient(#fdfdfd,#ebebeb);display:flex;align-items:center;justify-content:center;white-space:pre;font-size:12.5px;color:#222;">Tx <span class="u">1</span></div>
<div style="left:942px;top:432.75px;width:420.5px;height:25.5px;background:#fff;border:1px solid #c8c8c8;border-radius:2px"></div>
<div class="t" style="left:944px;top:445.75px;font-size:12.3px;color:#2c2c2c">ZL2IFB LU1NA -20</div>
<div style="left:1366px;top:439.25px;width:12.5px;height:12.5px;background:#ececec;border:1px solid #b4b4b4;border-radius:50%"></div>
<div style="left:1381.5px;top:432.75px;width:139px;height:25.5px;border:1px solid #b9b9b9;border-radius:2px;background:linear-gradient(#fdfdfd,#ebebeb);display:flex;align-items:center;justify-content:center;white-space:pre;font-size:12.5px;color:#222;">Tx <span class="u">2</span></div>
<div style="left:942px;top:459.75px;width:420.5px;height:25.5px;background:#fff;border:1px solid #c8c8c8;border-radius:2px"></div>
<div class="t" style="left:944px;top:472.75px;font-size:12.3px;color:#2c2c2c">ZL2IFB LU1NA R-20</div>
<div style="left:1366px;top:466.25px;width:12.5px;height:12.5px;background:#ececec;border:1px solid #b4b4b4;border-radius:50%"></div>
<div style="left:1381.5px;top:459.75px;width:139px;height:25.5px;border:1px solid #b9b9b9;border-radius:2px;background:linear-gradient(#fdfdfd,#ebebeb);display:flex;align-items:center;justify-content:center;white-space:pre;font-size:12.5px;color:#222;">Tx <span class="u">3</span></div>
<div style="left:942px;top:486.75px;width:420.5px;height:25.5px;background:#fff;border:1px solid #c8c8c8;border-radius:2px"></div>
<div class="t" style="left:944px;top:499.75px;font-size:12.3px;color:#2c2c2c">ZL2IFB LU1NA RRR</div>
<div style="left:1366px;top:493.25px;width:12.5px;height:12.5px;background:#ececec;border:1px solid #b4b4b4;border-radius:50%"></div>
<div style="left:1381.5px;top:486.75px;width:139px;height:25.5px;border:1px solid #b9b9b9;border-radius:2px;background:linear-gradient(#fdfdfd,#ebebeb);display:flex;align-items:center;justify-content:center;white-space:pre;font-size:12.5px;color:#222;">Tx <span class="u">4</span></div>
<div style="left:942px;top:513.75px;width:420.5px;height:25.5px;background:#80f480;border:1px solid #60c860;border-radius:2px"></div>
<div style="left:1341px;top:514.75px;width:20.5px;height:23.5px;background:#98f898"></div>
<svg style="position:absolute;left:1346px;top:523.75px" width="10" height="6" viewBox="0 0 10 6"><path d="M0.5 0.5 L9.5 0.5 L5 5.5 Z" fill="#444"/></svg>
<div class="t" style="left:944px;top:526.75px;font-size:12.3px;color:#2c2c2c">ZL2IFB LU1NA 73</div>
<div style="left:1366px;top:520.25px;width:12.5px;height:12.5px;background:#ececec;border:1px solid #b4b4b4;border-radius:50%"></div>
<div style="left:1369px;top:523.25px;width:6.5px;height:6.5px;background:#6a6a6a;border-radius:50%"></div>
<div style="left:1381.5px;top:513.75px;width:139px;height:25.5px;border:1px solid #b9b9b9;border-radius:2px;background:linear-gradient(#fdfdfd,#ebebeb);display:flex;align-items:center;justify-content:center;white-space:pre;font-size:12.5px;color:#222;">Tx <span class="u">5</span></div>
<div style="left:942px;top:540.75px;width:420.5px;height:25.5px;background:#fff;border:1px solid #c8c8c8;border-radius:2px"></div>
<div class="t" style="left:944px;top:553.75px;font-size:12.3px;color:#2c2c2c">CQ LU1NA FG72</div>
<div style="left:1366px;top:547.25px;width:12.5px;height:12.5px;background:#ececec;border:1px solid #b4b4b4;border-radius:50%"></div>
<div style="left:1381.5px;top:540.75px;width:139px;height:25.5px;border:1px solid #b9b9b9;border-radius:2px;background:linear-gradient(#fdfdfd,#ebebeb);display:flex;align-items:center;justify-content:center;white-space:pre;font-size:12.5px;color:#222;">Tx <span class="u">6</span></div>
<div style="left:1526.5px;top:375px;width:71.5px;height:193.5px;border-left:1px solid #c8c8c8;border-top:1px solid #d8d8d8;border-bottom:1px solid #d8d8d8"></div>
<div style="left:1543.5px;top:398.5px;width:8.5px;height:133px;background:#ffaa00"></div>
<svg style="position:absolute;left:1543px;top:393px" width="10" height="8" viewBox="0 0 10 8"><path d="M0.5 0.5 L9.5 4 L0.5 7.5 Z" fill="#111"/></svg>
<div style="left:1552px;top:391.5px;width:1px;height:141px;background:#222"></div>
<div style="left:1552px;top:394.8px;width:4px;height:1px;background:#222"></div>
<div class="t" style="left:1556px;top:395.3px;font-size:12.5px;color:#2c2c2c">90+</div>
<div style="left:1552px;top:410.23px;width:4px;height:1px;background:#222"></div>
<div class="t" style="left:1556px;top:410.73px;font-size:12.5px;color:#2c2c2c">80</div>
<div style="left:1552px;top:425.66px;width:4px;height:1px;background:#222"></div>
<div class="t" style="left:1556px;top:426.16px;font-size:12.5px;color:#2c2c2c">70</div>
<div style="left:1552px;top:441.09000000000003px;width:4px;height:1px;background:#222"></div>
<div class="t" style="left:1556px;top:441.59000000000003px;font-size:12.5px;color:#2c2c2c">60</div>
<div style="left:1552px;top:456.52px;width:4px;height:1px;background:#222"></div>
<div class="t" style="left:1556px;top:457.02px;font-size:12.5px;color:#2c2c2c">50</div>
<div style="left:1552px;top:471.95000000000005px;width:4px;height:1px;background:#222"></div>
<div class="t" style="left:1556px;top:472.45000000000005px;font-size:12.5px;color:#2c2c2c">40</div>
<div style="left:1552px;top:487.38px;width:4px;height:1px;background:#222"></div>
<div class="t" style="left:1556px;top:487.88px;font-size:12.5px;color:#2c2c2c">30</div>
<div style="left:1552px;top:502.81px;width:4px;height:1px;background:#222"></div>
<div class="t" style="left:1556px;top:503.31px;font-size:12.5px;color:#2c2c2c">20</div>
<div style="left:1552px;top:518.24px;width:4px;height:1px;background:#222"></div>
<div class="t" style="left:1556px;top:518.74px;font-size:12.5px;color:#2c2c2c">10</div>
<div style="left:1552px;top:533.6700000000001px;width:4px;height:1px;background:#222"></div>
<div class="t" style="left:1556px;top:534.1700000000001px;font-size:12.5px;color:#2c2c2c">0</div>
<div class="t" style="left:1551px;top:552px;font-size:12.5px;color:#2c2c2c;transform:translate(-50%,-50%)">86dB</div>
<div style="left:1px;top:574.5px;width:125px;height:17.5px;background:#00f000;border:1px solid #00d000"></div>
<div class="t" style="left:5.5px;top:583.5px;font-size:12.5px;color:#0a4a0a">Receiving</div>
<div style="left:131px;top:574.5px;width:52px;height:17.5px;background:#6f9ef8;border:1px solid #5a88e0"></div>
<div class="t" style="left:135px;top:583.5px;font-size:12.5px;color:#10205a">FT8</div>
<div style="left:189px;top:575.5px;width:152px;height:16.5px;background:#f2f2f2;border-left:1px solid #aaa;border-top:1px solid #aaa"></div>
<div class="t" style="left:192.5px;top:583.5px;font-size:12.5px;color:#2c2c2c">Last Tx: ZL2IFB LU1NA 73</div>
<div style="left:347.5px;top:575.5px;width:58px;height:16.5px;background:#f2f2f2;border-left:1px solid #aaa;border-top:1px solid #aaa"></div>
<div class="t" style="left:351.5px;top:583.5px;font-size:12.5px;color:#2c2c2c">WD 20m</div>
<div style="left:412.5px;top:574.5px;width:911px;height:17px;background:#fff;border:1.5px solid #606060;border-radius:4px;overflow:hidden"><div style="left:0;top:0;width:606px;height:14px;background:#00ee00"></div></div>
<div class="t" style="left:869px;top:583.5px;font-size:12.5px;color:#2c2c2c;transform:translate(-50%,-50%)">10/15</div>
<div style="left:1329px;top:574.5px;width:78px;height:17px;background:#80f880;border-left:1px solid #a0a0a0;border-top:1px solid #a0a0a0"></div>
<div class="t" style="left:1333px;top:583.5px;font-size:12.5px;color:#0a3a0a;letter-spacing:-0.4px">Logd ZL2IFB</div>
<div style="left:1412.5px;top:575px;width:73px;height:16.5px;background:#f2f2f2;border-left:1px solid #aaa;border-top:1px solid #aaa"></div>
<div class="t" style="left:1416px;top:583.5px;font-size:12.5px;color:#2c2c2c">04.01.2021</div>
<div style="left:1493px;top:574.5px;width:82.5px;height:17px;background:#80f880;border-left:1px solid #a0a0a0;border-top:1px solid #a0a0a0"></div>
<div class="t" style="left:1497px;top:583.5px;font-size:12.5px;color:#0a3a0a">FT8  35</div>
<div style="left:0px;top:596px;width:1600px;height:4px;background:#e6e6e6"></div>
<div style="left:17px;top:596px;width:37px;height:4px;background:#5a70b0"></div>
<div style="left:484px;top:596px;width:46px;height:4px;background:#5a5a5a"></div>
<div style="left:530px;top:596px;width:115px;height:4px;background:#d0b8b8"></div>
<div style="left:645px;top:596px;width:355px;height:4px;background:#3e3e3e"></div>
<div style="left:1000px;top:596px;width:50px;height:4px;background:#c4c4b4"></div>
<div style="left:1050px;top:596px;width:47px;height:4px;background:#6e6e6e"></div>
<div style="left:1232px;top:596px;width:22px;height:4px;background:#1a1a1a;border-radius:11px 11px 0 0"></div>
<div style="left:0px;top:599.5px;width:1600px;height:1px;background:#a8a8a8"></div>
<div style="left:0px;top:600.5px;width:1600px;height:30.5px;background:#fff"></div>
<svg style="position:absolute;left:4.5px;top:608.5px" width="15" height="15" viewBox="0 0 20 20"><path d="M11.6 7.1 L15 5 L12.9 8.4 Z M12.9 11.6 L15 15 L11.6 12.9 Z M8.4 12.9 L5 15 L7.1 11.6 Z M7.1 8.4 L5 5 L8.4 7.1 Z" fill="#1212a0"/><path d="M10 0 L12 8 L10 10 Z M20 10 L12 12 L10 10 Z M10 20 L8 12 L10 10 Z M0 10 L8 8 L10 10 Z" fill="#1212a0"/><path d="M10 0 L8 8 L10 10 Z M20 10 L12 8 L10 10 Z M10 20 L12 12 L10 10 Z M0 10 L8 12 L10 10 Z" fill="#5a5ae6"/></svg>
<div class="t" style="left:24px;top:616px;font-size:12.5px;color:#111">JTDX - Wide Graph</div>
<div style="left:1470px;top:615px;width:11px;height:1px;background:#222"></div>
<div style="left:1519px;top:610px;width:10px;height:10px;border:1px solid #ccc"></div>
<svg style="position:absolute;left:1567px;top:610px" width="12" height="12" viewBox="0 0 12 12"><path d="M0.5 0.5 L11.5 11.5 M11.5 0.5 L0.5 11.5" stroke="#222" stroke-width="1.1"/></svg>
<div style="left:0px;top:631px;width:1600px;height:2px;background:#6a6a6a"></div>
<div style="left:0px;top:633px;width:1600px;height:24px;background:#fff"></div>
<div style="left:51.82px;top:651px;width:1px;height:6px;background:#333"></div>
<div style="left:108.66px;top:651px;width:1px;height:6px;background:#333"></div>
<div style="left:165.5px;top:646px;width:1.2px;height:11px;background:#111"></div>
<div class="t" style="left:166.0px;top:641px;font-size:17px;color:#000;transform:translate(-50%,-50%)">500</div>
<div style="left:222.34px;top:651px;width:1px;height:6px;background:#333"></div>
<div style="left:279.18px;top:651px;width:1px;height:6px;background:#333"></div>
<div style="left:336.02px;top:651px;width:1px;height:6px;background:#333"></div>
<div style="left:392.86px;top:651px;width:1px;height:6px;background:#333"></div>
<div style="left:449.7px;top:646px;width:1.2px;height:11px;background:#111"></div>
<div class="t" style="left:450.2px;top:641px;font-size:17px;color:#000;transform:translate(-50%,-50%)">1000</div>
<div style="left:506.54px;top:651px;width:1px;height:6px;background:#333"></div>
<div style="left:563.38px;top:651px;width:1px;height:6px;background:#333"></div>
<div style="left:620.22px;top:651px;width:1px;height:6px;background:#333"></div>
<div style="left:677.06px;top:651px;width:1px;height:6px;background:#333"></div>
<div style="left:733.9px;top:646px;width:1.2px;height:11px;background:#111"></div>
<div class="t" style="left:734.4px;top:641px;font-size:17px;color:#000;transform:translate(-50%,-50%)">1500</div>
<div style="left:847.58px;top:651px;width:1px;height:6px;background:#333"></div>
<div style="left:961.26px;top:651px;width:1px;height:6px;background:#333"></div>
<div style="left:1018.1px;top:646px;width:1.2px;height:11px;background:#111"></div>
<div class="t" style="left:1018.6px;top:641px;font-size:17px;color:#000;transform:translate(-50%,-50%)">2000</div>
<div style="left:1074.94px;top:651px;width:1px;height:6px;background:#333"></div>
<div style="left:1131.78px;top:651px;width:1px;height:6px;background:#333"></div>
<div style="left:1188.62px;top:651px;width:1px;height:6px;background:#333"></div>
<div style="left:1245.46px;top:651px;width:1px;height:6px;background:#333"></div>
<div style="left:1302.3px;top:646px;width:1.2px;height:11px;background:#111"></div>
<div class="t" style="left:1302.8px;top:641px;font-size:17px;color:#000;transform:translate(-50%,-50%)">2500</div>
<div style="left:1359.14px;top:651px;width:1px;height:6px;background:#333"></div>
<div style="left:1415.98px;top:651px;width:1px;height:6px;background:#333"></div>
<div style="left:1472.82px;top:651px;width:1px;height:6px;background:#333"></div>
<div style="left:1529.66px;top:651px;width:1px;height:6px;background:#333"></div>
<div style="left:1586.5px;top:646px;width:1.2px;height:11px;background:#111"></div>
<div class="t" style="left:1587.0px;top:641px;font-size:17px;color:#000;transform:translate(-50%,-50%)">3000</div>
<div style="left:1597px;top:633px;width:3px;height:24px;background:#fff"></div>
<div style="left:3px;top:640px;width:14.5px;height:14.5px;background:#fff;border:1px solid #b4b4b4"></div>
<div class="t" style="left:22.5px;top:647.5px;font-size:12.5px;color:#2c2c2c">Contrc</div>
<div style="left:67px;top:640px;width:14px;height:14px;background:#fff;border:1px solid #b4b4b4"></div>
<svg style="position:absolute;left:67px;top:640px" width="14" height="14" viewBox="0 0 14 14"><path d="M3 7.2 L6 11 L11.2 2.6" fill="none" stroke="#111" stroke-width="2"/></svg>
<div class="t" style="left:86px;top:647.5px;font-size:12.5px;color:#2c2c2c">Bars</div>
<div style="left:792px;top:644.5px;width:26px;height:2.5px;background:#d01020"></div>
<div style="left:792px;top:644.5px;width:2px;height:6px;background:#d01020"></div>
<div style="left:816px;top:644.5px;width:2px;height:6px;background:#d01020"></div>
<div style="left:882px;top:654.5px;width:26px;height:2.5px;background:#20d020"></div>
<div style="left:882px;top:651px;width:2px;height:6px;background:#20d020"></div>
<div style="left:906px;top:651px;width:2px;height:6px;background:#20d020"></div>
<svg style="position:absolute;left:0;top:657px" width="1600" height="130" viewBox="0 0 1600 130"><defs>
<linearGradient id="wfdark" x1="0" x2="1600" y1="0" y2="0" gradientUnits="userSpaceOnUse">
<stop offset="0" stop-color="#000010" stop-opacity="0.34"/>
<stop offset="0.05" stop-color="#000010" stop-opacity="0.27"/>
<stop offset="0.12" stop-color="#000010" stop-opacity="0.12"/>
<stop offset="0.25" stop-color="#000010" stop-opacity="0.0"/>
<stop offset="0.72" stop-color="#000010" stop-opacity="0.0"/>
<stop offset="0.81" stop-color="#000010" stop-opacity="0.18"/>
<stop offset="0.875" stop-color="#000010" stop-opacity="0.38"/>
<stop offset="0.92" stop-color="#000008" stop-opacity="0.62"/>
<stop offset="0.955" stop-color="#000000" stop-opacity="0.90"/>
<stop offset="0.975" stop-color="#000000" stop-opacity="0.97"/>
<stop offset="1" stop-color="#000000" stop-opacity="0.98"/>
</linearGradient>
<filter id="wfn" x="0" y="0" width="100%" height="100%" color-interpolation-filters="sRGB">
<feTurbulence type="fractalNoise" baseFrequency="0.24 0.42" numOctaves="3" seed="11" result="n"/>
<feColorMatrix in="n" type="matrix" values="1.9 0 0 0 -0.53  1.9 0 0 0 -0.53  1.9 0 0 0 -0.53  0 0 0 0 1" result="g"/>
<feComponentTransfer in="g">
<feFuncR type="table" tableValues="0 0 0.01 0.02 0.03 0.05 0.08 0.12 0.20 0.32 0.55"/>
<feFuncG type="table" tableValues="0.02 0.03 0.05 0.08 0.12 0.18 0.25 0.34 0.46 0.60 0.80"/>
<feFuncB type="table" tableValues="0.40 0.50 0.62 0.73 0.83 0.90 0.96 1 1 1 1"/>
</feComponentTransfer>
</filter>
<filter id="sblur" x="-10%" y="-10%" width="120%" height="120%"><feGaussianBlur stdDeviation="0.45"/></filter>
</defs><rect width="1600" height="130" fill="#1038c0"/><rect width="1600" height="130" filter="url(#wfn)"/><rect width="1600" height="130" fill="url(#wfdark)"/><g filter="url(#sblur)"><line x1="305.7" y1="1.0" x2="319.4" y2="-0.5" stroke="#e4e438" stroke-width="1.7" opacity="0.79"/><line x1="298.4" y1="1.0" x2="309.2" y2="0.5" stroke="#9cc8ff" stroke-width="1.7" opacity="0.78"/><line x1="298.0" y1="4.6" x2="313.6" y2="4.7" stroke="#e4e438" stroke-width="1.3" opacity="0.92"/><line x1="295.5" y1="4.6" x2="301.0" y2="4.2" stroke="#9cc8ff" stroke-width="1.7" opacity="0.86"/><line x1="305.7" y1="8.5" x2="318.7" y2="9.0" stroke="#e4e438" stroke-width="1.7" opacity="0.72"/><line x1="303.6" y1="8.5" x2="311.9" y2="7.6" stroke="#e4e438" stroke-width="2.1" opacity="0.93"/><line x1="301.7" y1="11.0" x2="308.5" y2="10.9" stroke="#e4e438" stroke-width="1.7" opacity="0.80"/><line x1="296.5" y1="11.0" x2="315.4" y2="10.0" stroke="#9cc8ff" stroke-width="1.7" opacity="0.90"/><line x1="303.4" y1="11.0" x2="316.1" y2="9.4" stroke="#e4e438" stroke-width="1.7" opacity="0.77"/><line x1="308.7" y1="13.5" x2="315.0" y2="12.1" stroke="#e4e438" stroke-width="1.7" opacity="0.76"/><line x1="300.1" y1="13.5" x2="316.3" y2="12.6" stroke="#e4e438" stroke-width="2.1" opacity="0.83"/><line x1="297.7" y1="13.5" x2="308.7" y2="13.0" stroke="#9cc8ff" stroke-width="1.3" opacity="0.81"/><line x1="300.4" y1="17.3" x2="311.6" y2="17.5" stroke="#e4e438" stroke-width="1.7" opacity="0.85"/><line x1="304.3" y1="17.3" x2="318.6" y2="16.5" stroke="#9cc8ff" stroke-width="2.1" opacity="0.80"/><line x1="295.9" y1="19.7" x2="307.4" y2="20.1" stroke="#e4e438" stroke-width="1.3" opacity="0.93"/><line x1="307.8" y1="19.7" x2="319.1" y2="19.1" stroke="#e4e438" stroke-width="2.1" opacity="0.84"/><line x1="305.3" y1="23.1" x2="319.5" y2="22.9" stroke="#e4e438" stroke-width="1.3" opacity="0.91"/><line x1="302.8" y1="23.1" x2="320.0" y2="23.3" stroke="#e4e438" stroke-width="2.1" opacity="0.67"/><line x1="299.0" y1="23.1" x2="317.2" y2="23.1" stroke="#e4e438" stroke-width="1.7" opacity="0.68"/><line x1="297.9" y1="26.4" x2="307.4" y2="25.4" stroke="#9cc8ff" stroke-width="2.1" opacity="0.73"/><line x1="300.1" y1="26.4" x2="315.9" y2="25.5" stroke="#e4e438" stroke-width="1.3" opacity="0.74"/><line x1="308.3" y1="26.4" x2="318.6" y2="25.4" stroke="#e4e438" stroke-width="2.1" opacity="0.80"/><line x1="302.4" y1="81.0" x2="308.8" y2="79.8" stroke="#e4e438" stroke-width="1.7" opacity="0.73"/><line x1="295.7" y1="81.0" x2="303.9" y2="80.9" stroke="#9cc8ff" stroke-width="2.1" opacity="0.77"/><line x1="301.1" y1="84.5" x2="314.4" y2="83.5" stroke="#e4e438" stroke-width="1.3" opacity="0.76"/><line x1="302.1" y1="84.5" x2="321.3" y2="83.8" stroke="#9cc8ff" stroke-width="1.3" opacity="0.82"/><line x1="295.4" y1="84.5" x2="304.0" y2="83.6" stroke="#e4e438" stroke-width="2.1" opacity="0.76"/><line x1="298.0" y1="87.7" x2="318.2" y2="87.0" stroke="#e4e438" stroke-width="1.7" opacity="0.89"/><line x1="311.3" y1="87.7" x2="321.7" y2="88.2" stroke="#e4e438" stroke-width="1.7" opacity="0.86"/><line x1="308.4" y1="90.7" x2="320.9" y2="90.2" stroke="#e4e438" stroke-width="1.7" opacity="0.85"/><line x1="308.6" y1="90.7" x2="320.5" y2="89.9" stroke="#e4e438" stroke-width="2.1" opacity="0.87"/><line x1="301.2" y1="93.8" x2="320.6" y2="94.1" stroke="#9cc8ff" stroke-width="2.1" opacity="0.73"/><line x1="297.5" y1="93.8" x2="316.4" y2="94.3" stroke="#e4e438" stroke-width="2.1" opacity="0.82"/><line x1="298.6" y1="97.0" x2="308.3" y2="96.5" stroke="#9cc8ff" stroke-width="2.1" opacity="0.91"/><line x1="298.4" y1="97.0" x2="315.4" y2="95.4" stroke="#e4e438" stroke-width="2.1" opacity="0.68"/><line x1="295.6" y1="97.0" x2="309.4" y2="96.7" stroke="#e4e438" stroke-width="1.3" opacity="0.88"/><line x1="298.8" y1="99.5" x2="307.6" y2="99.8" stroke="#e4e438" stroke-width="2.1" opacity="0.88"/><line x1="302.6" y1="99.5" x2="308.5" y2="98.4" stroke="#e4e438" stroke-width="1.3" opacity="0.94"/><line x1="310.8" y1="99.5" x2="316.2" y2="97.9" stroke="#e4e438" stroke-width="1.3" opacity="0.87"/><line x1="295.7" y1="102.6" x2="306.6" y2="103.2" stroke="#e4e438" stroke-width="1.3" opacity="0.65"/><line x1="299.8" y1="102.6" x2="319.1" y2="102.7" stroke="#e4e438" stroke-width="1.7" opacity="0.66"/><line x1="301.2" y1="105.7" x2="320.0" y2="105.9" stroke="#e4e438" stroke-width="1.7" opacity="0.94"/><line x1="309.1" y1="105.7" x2="315.6" y2="105.9" stroke="#e4e438" stroke-width="1.3" opacity="0.81"/><line x1="297.0" y1="109.3" x2="309.9" y2="109.8" stroke="#e4e438" stroke-width="2.1" opacity="0.94"/><line x1="303.4" y1="109.3" x2="318.4" y2="109.8" stroke="#e4e438" stroke-width="1.7" opacity="0.66"/><line x1="296.9" y1="109.3" x2="304.3" y2="109.1" stroke="#e4e438" stroke-width="2.1" opacity="0.93"/><line x1="295.8" y1="113.3" x2="311.7" y2="111.8" stroke="#e4e438" stroke-width="2.1" opacity="0.86"/><line x1="302.7" y1="113.3" x2="311.6" y2="112.8" stroke="#e4e438" stroke-width="1.3" opacity="0.77"/><line x1="474.1" y1="1.0" x2="490.8" y2="1.4" stroke="#e4e438" stroke-width="2.1" opacity="0.67"/><line x1="495.2" y1="1.0" x2="500.5" y2="-0.0" stroke="#e4e438" stroke-width="2.1" opacity="0.79"/><line x1="489.4" y1="4.7" x2="502.2" y2="3.6" stroke="#e4e438" stroke-width="2.1" opacity="0.77"/><line x1="493.5" y1="4.7" x2="498.8" y2="3.5" stroke="#9cc8ff" stroke-width="1.3" opacity="0.74"/><line x1="495.7" y1="4.7" x2="501.3" y2="4.2" stroke="#e4e438" stroke-width="1.7" opacity="0.86"/><line x1="479.9" y1="8.6" x2="499.2" y2="9.1" stroke="#e4e438" stroke-width="1.7" opacity="0.68"/><line x1="477.5" y1="8.6" x2="485.2" y2="9.1" stroke="#e4e438" stroke-width="2.1" opacity="0.91"/><line x1="488.4" y1="8.6" x2="501.7" y2="8.2" stroke="#e4e438" stroke-width="1.7" opacity="0.83"/><line x1="483.0" y1="12.4" x2="504.9" y2="12.3" stroke="#e4e438" stroke-width="1.7" opacity="0.94"/><line x1="477.8" y1="12.4" x2="500.6" y2="12.4" stroke="#e4e438" stroke-width="2.1" opacity="0.73"/><line x1="483.0" y1="14.9" x2="504.9" y2="13.5" stroke="#e4e438" stroke-width="1.7" opacity="0.92"/><line x1="483.8" y1="14.9" x2="489.2" y2="14.2" stroke="#e4e438" stroke-width="2.1" opacity="0.83"/><line x1="491.5" y1="14.9" x2="497.4" y2="14.0" stroke="#9cc8ff" stroke-width="1.7" opacity="0.80"/><line x1="487.0" y1="34.0" x2="498.4" y2="33.5" stroke="#e8e834" stroke-width="1.3" opacity="0.81"/><line x1="478.4" y1="34.0" x2="502.9" y2="34.1" stroke="#e8e834" stroke-width="2.1" opacity="0.80"/><line x1="493.0" y1="36.4" x2="503.6" y2="34.9" stroke="#e8e834" stroke-width="1.7" opacity="0.93"/><line x1="478.0" y1="36.4" x2="487.1" y2="36.2" stroke="#e8e834" stroke-width="1.7" opacity="0.71"/><line x1="473.4" y1="38.6" x2="489.2" y2="38.1" stroke="#e8e834" stroke-width="2.1" opacity="0.95"/><line x1="478.7" y1="38.6" x2="483.9" y2="38.6" stroke="#e8e834" stroke-width="2.1" opacity="0.74"/><line x1="476.1" y1="38.6" x2="490.1" y2="38.0" stroke="#e8e834" stroke-width="1.7" opacity="0.94"/><line x1="490.1" y1="40.2" x2="504.9" y2="39.7" stroke="#e8e834" stroke-width="2.1" opacity="0.79"/><line x1="471.7" y1="40.2" x2="497.9" y2="39.5" stroke="#e8e834" stroke-width="2.1" opacity="0.82"/><line x1="474.5" y1="41.9" x2="495.4" y2="41.5" stroke="#9cc8ff" stroke-width="1.3" opacity="0.95"/><line x1="474.1" y1="41.9" x2="494.2" y2="41.6" stroke="#9cc8ff" stroke-width="1.3" opacity="0.79"/><line x1="482.0" y1="41.9" x2="490.8" y2="40.4" stroke="#e8e834" stroke-width="1.7" opacity="0.91"/><line x1="477.4" y1="44.5" x2="489.3" y2="43.2" stroke="#e8e834" stroke-width="2.1" opacity="0.90"/><line x1="487.5" y1="44.5" x2="494.2" y2="44.9" stroke="#e8e834" stroke-width="1.7" opacity="0.80"/><line x1="476.5" y1="47.1" x2="493.7" y2="46.5" stroke="#e8e834" stroke-width="1.7" opacity="1.00"/><line x1="477.8" y1="47.1" x2="495.0" y2="46.0" stroke="#9cc8ff" stroke-width="1.3" opacity="0.70"/><line x1="474.9" y1="47.1" x2="481.0" y2="47.0" stroke="#e8e834" stroke-width="1.3" opacity="0.85"/><line x1="471.1" y1="49.3" x2="497.3" y2="48.9" stroke="#e8e834" stroke-width="1.7" opacity="0.89"/><line x1="475.2" y1="49.3" x2="484.5" y2="48.7" stroke="#e8e834" stroke-width="1.3" opacity="0.82"/><line x1="492.0" y1="49.3" x2="502.3" y2="49.5" stroke="#e8e834" stroke-width="1.3" opacity="0.69"/><line x1="475.7" y1="51.1" x2="497.1" y2="50.1" stroke="#e8e834" stroke-width="1.7" opacity="0.86"/><line x1="473.6" y1="51.1" x2="499.7" y2="51.5" stroke="#e8e834" stroke-width="2.1" opacity="0.92"/><line x1="489.4" y1="53.2" x2="503.5" y2="52.8" stroke="#9cc8ff" stroke-width="1.3" opacity="0.79"/><line x1="482.8" y1="53.2" x2="501.8" y2="53.0" stroke="#e8e834" stroke-width="2.1" opacity="0.75"/><line x1="478.9" y1="55.6" x2="491.1" y2="55.1" stroke="#9cc8ff" stroke-width="1.7" opacity="0.99"/><line x1="470.7" y1="55.6" x2="489.9" y2="56.0" stroke="#e8e834" stroke-width="1.7" opacity="0.89"/><line x1="474.8" y1="55.6" x2="481.1" y2="55.4" stroke="#e8e834" stroke-width="2.1" opacity="0.81"/><line x1="474.0" y1="57.6" x2="483.5" y2="57.3" stroke="#e8e834" stroke-width="1.7" opacity="0.94"/><line x1="481.7" y1="57.6" x2="503.4" y2="57.2" stroke="#9cc8ff" stroke-width="1.3" opacity="0.73"/><line x1="474.6" y1="59.8" x2="499.1" y2="58.3" stroke="#e8e834" stroke-width="1.3" opacity="0.84"/><line x1="477.1" y1="59.8" x2="500.4" y2="58.5" stroke="#e8e834" stroke-width="2.1" opacity="0.97"/><line x1="478.2" y1="59.8" x2="489.5" y2="58.3" stroke="#9cc8ff" stroke-width="1.7" opacity="0.80"/><line x1="486.5" y1="62.2" x2="499.8" y2="62.5" stroke="#e8e834" stroke-width="1.3" opacity="0.72"/><line x1="484.9" y1="62.2" x2="503.1" y2="61.7" stroke="#e8e834" stroke-width="2.1" opacity="0.93"/><line x1="495.2" y1="62.2" x2="501.6" y2="61.0" stroke="#e8e834" stroke-width="1.7" opacity="0.82"/><line x1="473.6" y1="64.6" x2="486.5" y2="64.6" stroke="#e8e834" stroke-width="1.7" opacity="0.76"/><line x1="470.0" y1="64.6" x2="495.7" y2="63.4" stroke="#e8e834" stroke-width="1.3" opacity="0.85"/><line x1="479.8" y1="66.7" x2="496.0" y2="66.0" stroke="#e8e834" stroke-width="1.3" opacity="0.92"/><line x1="475.7" y1="66.7" x2="501.6" y2="66.6" stroke="#e8e834" stroke-width="1.7" opacity="0.85"/><line x1="478.4" y1="66.7" x2="502.7" y2="66.3" stroke="#9cc8ff" stroke-width="2.1" opacity="0.93"/><line x1="475.5" y1="68.9" x2="488.8" y2="68.6" stroke="#9cc8ff" stroke-width="1.7" opacity="0.72"/><line x1="474.1" y1="68.9" x2="480.8" y2="69.1" stroke="#e8e834" stroke-width="1.7" opacity="0.74"/><line x1="478.9" y1="68.9" x2="500.7" y2="69.3" stroke="#e8e834" stroke-width="2.1" opacity="0.98"/><line x1="476.9" y1="70.6" x2="488.9" y2="69.1" stroke="#e8e834" stroke-width="1.3" opacity="0.93"/><line x1="482.2" y1="70.6" x2="504.4" y2="69.4" stroke="#e8e834" stroke-width="1.7" opacity="0.89"/><line x1="470.7" y1="70.6" x2="496.8" y2="71.1" stroke="#9cc8ff" stroke-width="1.3" opacity="0.89"/><line x1="484.0" y1="72.9" x2="502.2" y2="72.0" stroke="#9cc8ff" stroke-width="1.7" opacity="0.96"/><line x1="482.2" y1="72.9" x2="492.3" y2="71.8" stroke="#e8e834" stroke-width="2.1" opacity="0.79"/><line x1="474.4" y1="75.1" x2="498.5" y2="74.4" stroke="#e8e834" stroke-width="1.7" opacity="0.82"/><line x1="474.4" y1="75.1" x2="491.9" y2="75.5" stroke="#e8e834" stroke-width="2.1" opacity="0.88"/><line x1="491.2" y1="75.1" x2="503.9" y2="74.9" stroke="#e8e834" stroke-width="1.3" opacity="0.83"/><line x1="475.4" y1="77.8" x2="493.2" y2="76.4" stroke="#e8e834" stroke-width="1.3" opacity="0.88"/><line x1="482.0" y1="77.8" x2="497.1" y2="76.3" stroke="#9cc8ff" stroke-width="1.3" opacity="0.78"/><line x1="471.6" y1="77.8" x2="496.8" y2="77.9" stroke="#e8e834" stroke-width="2.1" opacity="0.91"/><line x1="473.0" y1="79.9" x2="489.1" y2="78.5" stroke="#e8e834" stroke-width="1.7" opacity="0.71"/><line x1="491.3" y1="79.9" x2="502.1" y2="79.7" stroke="#e8e834" stroke-width="2.1" opacity="0.90"/><line x1="478.6" y1="82.2" x2="503.8" y2="82.2" stroke="#e8e834" stroke-width="2.1" opacity="0.68"/><line x1="471.8" y1="82.2" x2="495.5" y2="81.6" stroke="#e8e834" stroke-width="1.7" opacity="0.84"/><line x1="474.8" y1="82.2" x2="481.2" y2="82.6" stroke="#e8e834" stroke-width="1.7" opacity="0.85"/><line x1="478.9" y1="84.1" x2="490.9" y2="83.4" stroke="#e8e834" stroke-width="2.1" opacity="0.69"/><line x1="471.5" y1="84.1" x2="496.9" y2="82.8" stroke="#e8e834" stroke-width="1.3" opacity="0.76"/><line x1="478.7" y1="84.1" x2="495.5" y2="84.1" stroke="#e8e834" stroke-width="1.7" opacity="1.00"/><line x1="473.9" y1="86.4" x2="486.1" y2="86.0" stroke="#e8e834" stroke-width="1.7" opacity="0.88"/><line x1="473.2" y1="86.4" x2="497.6" y2="86.2" stroke="#9cc8ff" stroke-width="2.1" opacity="0.91"/><line x1="472.7" y1="86.4" x2="495.1" y2="86.1" stroke="#e8e834" stroke-width="2.1" opacity="0.78"/><line x1="471.1" y1="89.0" x2="493.2" y2="87.9" stroke="#e8e834" stroke-width="1.3" opacity="0.89"/><line x1="479.2" y1="89.0" x2="499.0" y2="88.5" stroke="#9cc8ff" stroke-width="1.7" opacity="0.97"/><line x1="471.1" y1="89.0" x2="479.9" y2="88.5" stroke="#e8e834" stroke-width="2.1" opacity="0.76"/><line x1="483.8" y1="90.7" x2="495.9" y2="89.4" stroke="#e8e834" stroke-width="2.1" opacity="0.99"/><line x1="476.3" y1="90.7" x2="498.9" y2="89.1" stroke="#e8e834" stroke-width="2.1" opacity="0.77"/><line x1="490.8" y1="93.3" x2="496.0" y2="92.2" stroke="#e8e834" stroke-width="2.1" opacity="0.92"/><line x1="473.8" y1="93.3" x2="496.1" y2="92.6" stroke="#e8e834" stroke-width="1.3" opacity="0.74"/><line x1="482.1" y1="95.4" x2="503.1" y2="94.4" stroke="#e8e834" stroke-width="1.3" opacity="0.90"/><line x1="473.6" y1="95.4" x2="487.9" y2="93.8" stroke="#9cc8ff" stroke-width="1.7" opacity="0.79"/><line x1="484.4" y1="98.0" x2="496.2" y2="96.9" stroke="#e8e834" stroke-width="1.3" opacity="0.81"/><line x1="481.5" y1="98.0" x2="499.5" y2="97.8" stroke="#e8e834" stroke-width="1.7" opacity="0.71"/><line x1="471.5" y1="98.0" x2="497.5" y2="96.6" stroke="#e8e834" stroke-width="1.7" opacity="0.89"/><line x1="482.8" y1="121.0" x2="498.0" y2="121.5" stroke="#e4e438" stroke-width="2.1" opacity="0.66"/><line x1="487.8" y1="121.0" x2="499.2" y2="120.8" stroke="#9cc8ff" stroke-width="1.3" opacity="0.76"/><line x1="478.1" y1="121.0" x2="495.0" y2="119.6" stroke="#e4e438" stroke-width="2.1" opacity="0.72"/><line x1="489.2" y1="123.7" x2="496.4" y2="122.4" stroke="#e4e438" stroke-width="1.3" opacity="0.69"/><line x1="475.0" y1="123.7" x2="493.4" y2="123.8" stroke="#9cc8ff" stroke-width="1.3" opacity="0.91"/><line x1="490.4" y1="123.7" x2="499.4" y2="123.3" stroke="#e4e438" stroke-width="1.3" opacity="0.70"/><line x1="481.0" y1="127.7" x2="499.3" y2="126.7" stroke="#e4e438" stroke-width="1.3" opacity="0.93"/><line x1="480.4" y1="127.7" x2="489.1" y2="127.9" stroke="#e4e438" stroke-width="2.1" opacity="0.85"/><line x1="433.7" y1="33.0" x2="445.7" y2="31.4" stroke="#d8e8ff" stroke-width="1.7" opacity="0.75"/><line x1="433.3" y1="33.0" x2="449.0" y2="31.4" stroke="#d8e8ff" stroke-width="1.3" opacity="0.70"/><line x1="440.1" y1="36.4" x2="447.9" y2="36.6" stroke="#d8e8ff" stroke-width="2.1" opacity="0.68"/><line x1="432.9" y1="36.4" x2="450.2" y2="35.0" stroke="#d8e8ff" stroke-width="1.7" opacity="0.63"/><line x1="438.6" y1="39.2" x2="453.8" y2="37.8" stroke="#d8e8ff" stroke-width="1.3" opacity="0.72"/><line x1="433.8" y1="39.2" x2="452.0" y2="39.4" stroke="#d8e8ff" stroke-width="2.1" opacity="0.67"/><line x1="945.8" y1="35.0" x2="970.2" y2="33.5" stroke="#f0f030" stroke-width="1.3" opacity="0.87"/><line x1="956.1" y1="35.0" x2="962.3" y2="33.5" stroke="#f0f030" stroke-width="1.3" opacity="0.83"/><line x1="943.0" y1="35.0" x2="959.3" y2="34.6" stroke="#9cc8ff" stroke-width="2.1" opacity="0.96"/><line x1="948.2" y1="37.0" x2="954.2" y2="36.6" stroke="#f0f030" stroke-width="1.7" opacity="0.80"/><line x1="950.2" y1="37.0" x2="957.6" y2="37.1" stroke="#f0f030" stroke-width="2.1" opacity="0.94"/><line x1="944.5" y1="37.0" x2="953.3" y2="36.9" stroke="#f0f030" stroke-width="2.1" opacity="0.82"/><line x1="948.1" y1="38.7" x2="969.0" y2="39.1" stroke="#f0f030" stroke-width="1.3" opacity="1.02"/><line x1="945.6" y1="38.7" x2="964.9" y2="38.3" stroke="#f0f030" stroke-width="1.7" opacity="1.00"/><line x1="964.6" y1="38.7" x2="975.5" y2="37.3" stroke="#f0f030" stroke-width="1.7" opacity="0.80"/><line x1="942.7" y1="40.2" x2="967.4" y2="39.9" stroke="#f0f030" stroke-width="1.7" opacity="0.86"/><line x1="952.8" y1="40.2" x2="965.0" y2="40.4" stroke="#f0f030" stroke-width="1.3" opacity="1.07"/><line x1="961.5" y1="41.8" x2="967.7" y2="41.6" stroke="#9cc8ff" stroke-width="1.7" opacity="0.85"/><line x1="956.1" y1="41.8" x2="969.0" y2="40.2" stroke="#f0f030" stroke-width="1.3" opacity="0.96"/><line x1="943.7" y1="43.3" x2="964.5" y2="42.3" stroke="#f0f030" stroke-width="1.7" opacity="0.78"/><line x1="952.9" y1="43.3" x2="967.1" y2="43.7" stroke="#f0f030" stroke-width="2.1" opacity="0.84"/><line x1="947.7" y1="44.8" x2="966.7" y2="43.7" stroke="#f0f030" stroke-width="1.3" opacity="0.83"/><line x1="953.7" y1="44.8" x2="963.5" y2="44.5" stroke="#f0f030" stroke-width="1.3" opacity="0.80"/><line x1="953.0" y1="44.8" x2="969.0" y2="43.9" stroke="#f0f030" stroke-width="2.1" opacity="1.08"/><line x1="959.1" y1="46.5" x2="973.5" y2="47.0" stroke="#f0f030" stroke-width="2.1" opacity="0.88"/><line x1="944.2" y1="46.5" x2="957.3" y2="46.3" stroke="#f0f030" stroke-width="1.3" opacity="1.09"/><line x1="943.2" y1="48.0" x2="955.1" y2="46.4" stroke="#f0f030" stroke-width="1.3" opacity="1.07"/><line x1="943.2" y1="48.0" x2="960.7" y2="46.9" stroke="#f0f030" stroke-width="2.1" opacity="0.83"/><line x1="944.2" y1="49.5" x2="958.9" y2="48.9" stroke="#9cc8ff" stroke-width="1.7" opacity="0.91"/><line x1="944.8" y1="49.5" x2="951.5" y2="48.6" stroke="#f0f030" stroke-width="2.1" opacity="0.80"/><line x1="969.1" y1="49.5" x2="974.6" y2="49.0" stroke="#f0f030" stroke-width="2.1" opacity="1.06"/><line x1="949.7" y1="51.2" x2="974.8" y2="51.2" stroke="#f0f030" stroke-width="1.7" opacity="1.06"/><line x1="946.8" y1="51.2" x2="959.1" y2="50.8" stroke="#f0f030" stroke-width="2.1" opacity="0.82"/><line x1="954.2" y1="51.2" x2="975.8" y2="51.5" stroke="#f0f030" stroke-width="1.7" opacity="1.00"/><line x1="942.6" y1="52.6" x2="954.9" y2="51.0" stroke="#f0f030" stroke-width="1.7" opacity="0.81"/><line x1="947.7" y1="52.6" x2="965.1" y2="52.7" stroke="#f0f030" stroke-width="1.7" opacity="1.08"/><line x1="946.7" y1="52.6" x2="959.2" y2="51.5" stroke="#f0f030" stroke-width="1.3" opacity="0.91"/><line x1="954.5" y1="54.5" x2="969.3" y2="54.7" stroke="#f0f030" stroke-width="2.1" opacity="0.79"/><line x1="957.0" y1="54.5" x2="969.9" y2="53.4" stroke="#9cc8ff" stroke-width="1.7" opacity="1.02"/><line x1="956.5" y1="56.0" x2="971.0" y2="54.6" stroke="#f0f030" stroke-width="1.3" opacity="0.76"/><line x1="949.9" y1="56.0" x2="967.0" y2="55.8" stroke="#f0f030" stroke-width="2.1" opacity="1.09"/><line x1="947.4" y1="56.0" x2="965.9" y2="55.6" stroke="#f0f030" stroke-width="1.3" opacity="1.02"/><line x1="959.0" y1="57.7" x2="974.8" y2="57.1" stroke="#9cc8ff" stroke-width="1.3" opacity="0.76"/><line x1="954.3" y1="57.7" x2="963.7" y2="57.8" stroke="#f0f030" stroke-width="2.1" opacity="0.89"/><line x1="949.0" y1="59.0" x2="972.4" y2="59.2" stroke="#f0f030" stroke-width="2.1" opacity="0.79"/><line x1="955.2" y1="59.0" x2="963.3" y2="59.3" stroke="#f0f030" stroke-width="2.1" opacity="0.75"/><line x1="944.2" y1="59.0" x2="965.6" y2="58.4" stroke="#f0f030" stroke-width="2.1" opacity="0.77"/><line x1="943.4" y1="60.7" x2="964.4" y2="60.3" stroke="#f0f030" stroke-width="1.7" opacity="0.76"/><line x1="954.2" y1="60.7" x2="961.2" y2="59.1" stroke="#9cc8ff" stroke-width="1.3" opacity="0.90"/><line x1="950.3" y1="60.7" x2="967.9" y2="60.2" stroke="#f0f030" stroke-width="1.7" opacity="0.92"/><line x1="954.9" y1="62.5" x2="974.2" y2="63.0" stroke="#f0f030" stroke-width="2.1" opacity="1.06"/><line x1="953.1" y1="62.5" x2="962.3" y2="61.8" stroke="#f0f030" stroke-width="1.7" opacity="0.77"/><line x1="949.5" y1="63.9" x2="958.8" y2="62.5" stroke="#f0f030" stroke-width="2.1" opacity="0.97"/><line x1="947.4" y1="63.9" x2="959.9" y2="62.6" stroke="#f0f030" stroke-width="2.1" opacity="1.08"/><line x1="959.1" y1="65.3" x2="967.5" y2="64.2" stroke="#f0f030" stroke-width="2.1" opacity="0.89"/><line x1="949.3" y1="65.3" x2="962.9" y2="63.9" stroke="#f0f030" stroke-width="1.7" opacity="0.94"/><line x1="942.4" y1="65.3" x2="956.4" y2="64.5" stroke="#f0f030" stroke-width="2.1" opacity="1.08"/><line x1="943.0" y1="66.6" x2="967.9" y2="65.5" stroke="#f0f030" stroke-width="1.3" opacity="0.84"/><line x1="953.1" y1="66.6" x2="960.8" y2="67.0" stroke="#f0f030" stroke-width="1.7" opacity="0.89"/><line x1="943.3" y1="68.1" x2="962.7" y2="66.7" stroke="#f0f030" stroke-width="1.7" opacity="1.06"/><line x1="942.4" y1="68.1" x2="952.9" y2="66.7" stroke="#f0f030" stroke-width="2.1" opacity="1.04"/><line x1="965.8" y1="68.1" x2="972.2" y2="67.5" stroke="#f0f030" stroke-width="2.1" opacity="0.89"/><line x1="950.0" y1="121.0" x2="962.6" y2="119.8" stroke="#e4e438" stroke-width="1.3" opacity="0.72"/><line x1="943.8" y1="121.0" x2="969.3" y2="120.8" stroke="#e4e438" stroke-width="1.7" opacity="0.77"/><line x1="948.4" y1="123.9" x2="955.2" y2="122.3" stroke="#e4e438" stroke-width="1.7" opacity="0.79"/><line x1="949.5" y1="123.9" x2="973.2" y2="123.8" stroke="#e4e438" stroke-width="1.3" opacity="0.77"/><line x1="943.3" y1="123.9" x2="965.3" y2="122.4" stroke="#e4e438" stroke-width="1.3" opacity="0.80"/><line x1="944.4" y1="126.9" x2="961.3" y2="125.4" stroke="#9cc8ff" stroke-width="1.7" opacity="0.86"/><line x1="964.3" y1="126.9" x2="972.4" y2="126.3" stroke="#e4e438" stroke-width="1.7" opacity="0.74"/><line x1="1254.1" y1="1.0" x2="1270.8" y2="-0.2" stroke="#d8e8b0" stroke-width="1.7" opacity="0.60"/><line x1="1250.8" y1="1.0" x2="1272.9" y2="0.6" stroke="#d8e8b0" stroke-width="1.3" opacity="0.65"/><line x1="1272.5" y1="1.0" x2="1280.7" y2="1.5" stroke="#d8e8b0" stroke-width="1.3" opacity="0.54"/><line x1="1254.7" y1="3.8" x2="1274.4" y2="3.8" stroke="#d8e8b0" stroke-width="1.7" opacity="0.53"/><line x1="1268.0" y1="3.8" x2="1277.3" y2="4.2" stroke="#d8e8b0" stroke-width="1.3" opacity="0.58"/><line x1="1270.6" y1="7.0" x2="1279.4" y2="7.4" stroke="#d8e8b0" stroke-width="1.7" opacity="0.68"/><line x1="1255.8" y1="7.0" x2="1263.4" y2="7.1" stroke="#9cc8ff" stroke-width="2.1" opacity="0.49"/><line x1="1252.0" y1="11.1" x2="1274.0" y2="9.6" stroke="#d8e8b0" stroke-width="2.1" opacity="0.69"/><line x1="1260.0" y1="11.1" x2="1274.5" y2="10.7" stroke="#d8e8b0" stroke-width="1.3" opacity="0.58"/><line x1="1252.0" y1="15.0" x2="1270.3" y2="15.5" stroke="#d8e8b0" stroke-width="1.3" opacity="0.50"/><line x1="1260.0" y1="15.0" x2="1275.5" y2="13.7" stroke="#d8e8b0" stroke-width="2.1" opacity="0.71"/><line x1="1252.1" y1="17.8" x2="1275.2" y2="17.6" stroke="#d8e8b0" stroke-width="1.7" opacity="0.68"/><line x1="1259.7" y1="17.8" x2="1274.6" y2="17.7" stroke="#9cc8ff" stroke-width="1.3" opacity="0.68"/><line x1="1257.2" y1="17.8" x2="1273.3" y2="17.1" stroke="#9cc8ff" stroke-width="2.1" opacity="0.66"/><line x1="1253.0" y1="21.1" x2="1258.0" y2="20.0" stroke="#d8e8b0" stroke-width="1.3" opacity="0.56"/><line x1="1261.2" y1="21.1" x2="1271.6" y2="19.7" stroke="#d8e8b0" stroke-width="2.1" opacity="0.67"/><line x1="1262.5" y1="21.1" x2="1276.9" y2="20.1" stroke="#d8e8b0" stroke-width="1.7" opacity="0.63"/><line x1="1266.5" y1="23.9" x2="1281.2" y2="23.5" stroke="#d8e8b0" stroke-width="1.7" opacity="0.53"/><line x1="1252.8" y1="23.9" x2="1273.9" y2="22.4" stroke="#9cc8ff" stroke-width="1.3" opacity="0.55"/><line x1="1252.9" y1="23.9" x2="1261.0" y2="22.6" stroke="#d8e8b0" stroke-width="1.7" opacity="0.53"/><line x1="1253.1" y1="27.3" x2="1276.4" y2="26.0" stroke="#d8e8b0" stroke-width="1.3" opacity="0.70"/><line x1="1253.8" y1="27.3" x2="1273.0" y2="25.9" stroke="#d8e8b0" stroke-width="1.3" opacity="0.65"/><line x1="1260.9" y1="79.0" x2="1274.0" y2="77.9" stroke="#e8e870" stroke-width="1.7" opacity="0.76"/><line x1="1262.5" y1="79.0" x2="1270.5" y2="78.1" stroke="#e8e870" stroke-width="2.1" opacity="0.85"/><line x1="1255.9" y1="81.3" x2="1272.4" y2="80.4" stroke="#e8e870" stroke-width="1.7" opacity="0.63"/><line x1="1257.7" y1="81.3" x2="1268.5" y2="80.7" stroke="#9cc8ff" stroke-width="1.3" opacity="0.85"/><line x1="1253.8" y1="84.7" x2="1269.8" y2="83.5" stroke="#9cc8ff" stroke-width="2.1" opacity="0.68"/><line x1="1253.1" y1="84.7" x2="1275.2" y2="84.3" stroke="#e8e870" stroke-width="1.3" opacity="0.76"/><line x1="1260.7" y1="87.5" x2="1281.7" y2="86.4" stroke="#e8e870" stroke-width="1.7" opacity="0.81"/><line x1="1257.7" y1="87.5" x2="1275.2" y2="87.8" stroke="#e8e870" stroke-width="2.1" opacity="0.84"/><line x1="1269.3" y1="91.3" x2="1276.4" y2="89.9" stroke="#e8e870" stroke-width="1.3" opacity="0.84"/><line x1="1257.8" y1="91.3" x2="1271.0" y2="90.3" stroke="#e8e870" stroke-width="2.1" opacity="0.73"/><line x1="1253.0" y1="95.1" x2="1266.7" y2="94.9" stroke="#e8e870" stroke-width="1.3" opacity="0.71"/><line x1="1258.9" y1="95.1" x2="1270.5" y2="93.5" stroke="#e8e870" stroke-width="1.7" opacity="0.83"/><line x1="1255.9" y1="95.1" x2="1265.5" y2="94.4" stroke="#e8e870" stroke-width="1.7" opacity="0.77"/><line x1="1260.3" y1="97.8" x2="1275.2" y2="96.3" stroke="#e8e870" stroke-width="1.7" opacity="0.83"/><line x1="1263.2" y1="97.8" x2="1270.8" y2="96.9" stroke="#e8e870" stroke-width="2.1" opacity="0.63"/><line x1="1268.0" y1="97.8" x2="1281.4" y2="97.1" stroke="#e8e870" stroke-width="1.3" opacity="0.70"/><line x1="1252.7" y1="100.1" x2="1259.5" y2="99.5" stroke="#9cc8ff" stroke-width="1.7" opacity="0.62"/><line x1="1258.2" y1="100.1" x2="1279.6" y2="100.5" stroke="#e8e870" stroke-width="1.7" opacity="0.83"/><line x1="1255.8" y1="100.1" x2="1274.1" y2="99.9" stroke="#9cc8ff" stroke-width="1.3" opacity="0.78"/><line x1="1259.0" y1="102.9" x2="1277.0" y2="102.6" stroke="#e8e870" stroke-width="1.7" opacity="0.59"/><line x1="1257.3" y1="102.9" x2="1264.6" y2="103.2" stroke="#e8e870" stroke-width="1.7" opacity="0.82"/><line x1="1252.4" y1="105.3" x2="1276.0" y2="105.1" stroke="#e8e870" stroke-width="2.1" opacity="0.69"/><line x1="1261.9" y1="105.3" x2="1281.8" y2="104.1" stroke="#e8e870" stroke-width="1.7" opacity="0.64"/><line x1="1254.7" y1="107.7" x2="1276.6" y2="107.7" stroke="#e8e870" stroke-width="2.1" opacity="0.78"/><line x1="1263.8" y1="107.7" x2="1277.3" y2="106.5" stroke="#e8e870" stroke-width="1.3" opacity="0.75"/><line x1="1253.2" y1="107.7" x2="1270.1" y2="107.4" stroke="#9cc8ff" stroke-width="2.1" opacity="0.64"/><line x1="1253.9" y1="111.3" x2="1274.6" y2="110.5" stroke="#e8e870" stroke-width="1.3" opacity="0.75"/><line x1="1265.0" y1="111.3" x2="1275.4" y2="110.8" stroke="#e8e870" stroke-width="1.7" opacity="0.69"/><line x1="1423.4" y1="1.0" x2="1443.6" y2="1.1" stroke="#a8c8ff" stroke-width="2.1" opacity="0.35"/><line x1="1420.2" y1="1.0" x2="1439.3" y2="0.8" stroke="#a8c8ff" stroke-width="1.7" opacity="0.37"/><line x1="1434.0" y1="1.0" x2="1440.5" y2="0.9" stroke="#a8c8ff" stroke-width="1.7" opacity="0.47"/><line x1="1426.7" y1="6.4" x2="1442.6" y2="5.0" stroke="#a8c8ff" stroke-width="1.3" opacity="0.41"/><line x1="1418.7" y1="6.4" x2="1437.3" y2="6.1" stroke="#a8c8ff" stroke-width="1.3" opacity="0.42"/><line x1="1419.7" y1="11.4" x2="1432.7" y2="12.0" stroke="#9cc8ff" stroke-width="1.3" opacity="0.43"/><line x1="1419.5" y1="11.4" x2="1430.0" y2="10.5" stroke="#a8c8ff" stroke-width="1.3" opacity="0.39"/><line x1="1415.4" y1="17.4" x2="1421.6" y2="17.3" stroke="#a8c8ff" stroke-width="1.3" opacity="0.40"/><line x1="1418.1" y1="17.4" x2="1440.3" y2="16.0" stroke="#a8c8ff" stroke-width="2.1" opacity="0.37"/><line x1="1422.8" y1="17.4" x2="1429.3" y2="17.9" stroke="#a8c8ff" stroke-width="1.3" opacity="0.35"/><line x1="1434.1" y1="23.0" x2="1440.1" y2="21.8" stroke="#a8c8ff" stroke-width="1.7" opacity="0.40"/><line x1="1421.0" y1="23.0" x2="1443.2" y2="22.3" stroke="#a8c8ff" stroke-width="1.7" opacity="0.39"/><line x1="1424.6" y1="27.2" x2="1444.8" y2="26.9" stroke="#9cc8ff" stroke-width="1.3" opacity="0.36"/><line x1="1430.5" y1="27.2" x2="1442.4" y2="27.0" stroke="#a8c8ff" stroke-width="1.3" opacity="0.36"/><line x1="1430.8" y1="27.2" x2="1440.3" y2="26.3" stroke="#a8c8ff" stroke-width="1.3" opacity="0.34"/><line x1="891.9" y1="34.0" x2="901.2" y2="33.2" stroke="#c8dcff" stroke-width="1.7" opacity="0.40"/><line x1="887.8" y1="34.0" x2="903.1" y2="34.3" stroke="#c8dcff" stroke-width="1.3" opacity="0.42"/><line x1="891.1" y1="34.0" x2="898.4" y2="32.8" stroke="#9cc8ff" stroke-width="1.3" opacity="0.41"/><line x1="891.7" y1="38.2" x2="907.6" y2="36.8" stroke="#9cc8ff" stroke-width="2.1" opacity="0.40"/><line x1="903.3" y1="38.2" x2="909.7" y2="38.6" stroke="#c8dcff" stroke-width="1.7" opacity="0.47"/><line x1="894.7" y1="38.2" x2="908.3" y2="37.8" stroke="#9cc8ff" stroke-width="1.3" opacity="0.41"/><line x1="888.9" y1="43.2" x2="900.4" y2="42.9" stroke="#c8dcff" stroke-width="1.7" opacity="0.41"/><line x1="883.1" y1="43.2" x2="898.3" y2="42.0" stroke="#c8dcff" stroke-width="1.7" opacity="0.38"/><line x1="883.4" y1="47.8" x2="899.2" y2="46.7" stroke="#c8dcff" stroke-width="2.1" opacity="0.41"/><line x1="883.9" y1="47.8" x2="901.2" y2="47.0" stroke="#9cc8ff" stroke-width="1.3" opacity="0.40"/><line x1="890.3" y1="47.8" x2="898.9" y2="47.1" stroke="#c8dcff" stroke-width="1.3" opacity="0.44"/><line x1="882.4" y1="52.0" x2="898.6" y2="51.0" stroke="#c8dcff" stroke-width="2.1" opacity="0.43"/><line x1="887.4" y1="52.0" x2="900.7" y2="51.2" stroke="#c8dcff" stroke-width="2.1" opacity="0.47"/><line x1="890.5" y1="57.0" x2="903.0" y2="55.8" stroke="#c8dcff" stroke-width="1.3" opacity="0.46"/><line x1="888.1" y1="57.0" x2="893.2" y2="57.1" stroke="#c8dcff" stroke-width="1.3" opacity="0.44"/><line x1="894.9" y1="62.0" x2="909.8" y2="62.6" stroke="#c8dcff" stroke-width="1.3" opacity="0.46"/><line x1="887.9" y1="62.0" x2="907.1" y2="61.0" stroke="#c8dcff" stroke-width="2.1" opacity="0.40"/><line x1="899.8" y1="66.9" x2="909.0" y2="67.3" stroke="#c8dcff" stroke-width="1.7" opacity="0.42"/><line x1="889.3" y1="66.9" x2="895.1" y2="67.2" stroke="#c8dcff" stroke-width="1.7" opacity="0.43"/><line x1="887.6" y1="66.9" x2="896.0" y2="65.9" stroke="#c8dcff" stroke-width="2.1" opacity="0.33"/><line x1="898.7" y1="121.0" x2="908.3" y2="121.2" stroke="#9cc8ff" stroke-width="2.1" opacity="0.36"/><line x1="886.6" y1="121.0" x2="894.0" y2="121.0" stroke="#c8dcff" stroke-width="2.1" opacity="0.45"/><line x1="882.3" y1="121.0" x2="899.2" y2="119.7" stroke="#c8dcff" stroke-width="1.3" opacity="0.47"/><line x1="889.3" y1="126.9" x2="908.3" y2="127.1" stroke="#c8dcff" stroke-width="2.1" opacity="0.39"/><line x1="900.2" y1="126.9" x2="907.4" y2="126.1" stroke="#c8dcff" stroke-width="2.1" opacity="0.41"/></g><rect x="0" y="29.9" width="1597" height="1.3" fill="#30c488"/><rect x="0" y="73.4" width="1597" height="1.3" fill="#30c488"/><rect x="0" y="116.9" width="1597" height="1.3" fill="#30c488"/></svg>
<div class="t" style="left:0px;top:682.5px;font-size:11px;color:#e0e0e0">17:38:15</div>
<div class="t" style="left:57px;top:682.5px;font-size:11px;color:#e0e0e0">17m</div>
<div class="t" style="left:0px;top:726px;font-size:11px;color:#e0e0e0">17:38:00</div>
<div class="t" style="left:57px;top:726px;font-size:11px;color:#e0e0e0">17m</div>
<div class="t" style="left:0px;top:769.5px;font-size:11px;color:#e0e0e0">17:37:45</div>
<div class="t" style="left:57px;top:769.5px;font-size:11px;color:#e0e0e0">17m</div>
<svg style="position:absolute;left:0;top:787px" width="1600" height="66" viewBox="0 0 1600 66"><defs><linearGradient id="spg" x1="0" x2="0" y1="0" y2="1">
<stop offset="0" stop-color="#0c0c96"/><stop offset="0.35" stop-color="#080870"/>
<stop offset="0.7" stop-color="#04043a"/><stop offset="1" stop-color="#000008"/></linearGradient></defs><rect width="1597" height="66" fill="url(#spg)"/><rect x="1490" width="107" height="66" fill="#000" opacity="0.0"/><line x1="0" y1="10.0" x2="1597" y2="10.0" stroke="#d8d8e8" stroke-width="1" stroke-dasharray="1.5 2.5" opacity="0.85"/><line x1="0" y1="19.3" x2="1597" y2="19.3" stroke="#d8d8e8" stroke-width="1" stroke-dasharray="1.5 2.5" opacity="0.85"/><line x1="0" y1="28.4" x2="1597" y2="28.4" stroke="#d8d8e8" stroke-width="1" stroke-dasharray="1.5 2.5" opacity="0.85"/><line x1="0" y1="38.2" x2="1597" y2="38.2" stroke="#d8d8e8" stroke-width="1" stroke-dasharray="1.5 2.5" opacity="0.85"/><line x1="0" y1="47.5" x2="1597" y2="47.5" stroke="#d8d8e8" stroke-width="1" stroke-dasharray="1.5 2.5" opacity="0.85"/><line x1="0" y1="56.4" x2="1597" y2="56.4" stroke="#d8d8e8" stroke-width="1" stroke-dasharray="1.5 2.5" opacity="0.85"/><line x1="166.0" y1="0" x2="166.0" y2="66" stroke="#d8d8e8" stroke-width="1" stroke-dasharray="1.5 2.5" opacity="0.85"/><line x1="450.2" y1="0" x2="450.2" y2="66" stroke="#d8d8e8" stroke-width="1" stroke-dasharray="1.5 2.5" opacity="0.85"/><line x1="734.4" y1="0" x2="734.4" y2="66" stroke="#d8d8e8" stroke-width="1" stroke-dasharray="1.5 2.5" opacity="0.85"/><line x1="1018.6" y1="0" x2="1018.6" y2="66" stroke="#d8d8e8" stroke-width="1" stroke-dasharray="1.5 2.5" opacity="0.85"/><line x1="1302.8" y1="0" x2="1302.8" y2="66" stroke="#d8d8e8" stroke-width="1" stroke-dasharray="1.5 2.5" opacity="0.85"/><line x1="1587.0" y1="0" x2="1587.0" y2="66" stroke="#d8d8e8" stroke-width="1" stroke-dasharray="1.5 2.5" opacity="0.85"/><polyline points="0.0,36.9 1.5,32.1 3.7,28.5 5.0,29.2 6.2,29.1 8.1,29.2 10.2,28.0 12.3,29.9 14.6,34.3 16.8,31.3 18.9,30.9 20.6,31.0 22.5,32.7 24.6,28.3 26.1,28.4 27.4,29.5 29.1,30.0 30.6,33.2 32.5,28.9 33.9,30.1 35.9,31.1 38.1,32.3 39.3,29.7 40.8,33.2 42.4,31.6 44.7,30.5 46.1,31.1 48.0,32.9 49.5,33.5 50.8,28.3 52.8,32.4 54.1,30.1 55.9,33.3 57.1,32.0 58.9,29.5 60.3,30.4 62.6,32.8 64.4,29.0 66.7,29.6 68.6,28.8 70.4,32.3 71.6,38.4 73.9,32.6 75.2,32.8 76.5,38.5 78.6,28.7 80.5,29.5 82.2,29.2 84.2,29.1 86.6,31.6 88.5,28.7 90.1,31.2 91.5,28.4 93.0,33.0 94.3,29.3 95.7,28.7 97.6,30.6 99.8,35.2 101.5,30.6 103.5,39.4 105.1,32.7 106.5,30.5 108.1,29.4 109.8,32.7 111.1,33.5 113.4,33.1 114.8,30.7 116.5,28.3 118.9,29.5 120.6,30.3 123.0,31.1 124.4,29.6 126.3,31.0 127.6,31.2 129.8,28.9 131.1,29.0 133.1,29.3 135.4,29.4 137.3,30.3 139.2,33.1 141.2,29.3 143.2,29.6 145.3,28.4 147.7,38.5 149.2,33.1 151.5,30.0 153.7,31.9 156.1,39.7 157.6,31.6 159.0,28.6 160.9,29.5 162.9,29.1 164.4,30.7 166.7,28.5 168.2,28.0 170.2,29.4 172.0,34.7 174.3,33.0 176.5,31.2 177.8,29.7 180.0,32.7 181.4,29.4 183.6,32.9 185.5,28.9 187.8,33.4 190.0,28.1 191.6,33.1 193.8,32.5 196.0,28.6 198.2,29.2 200.0,29.7 201.4,28.1 203.0,32.8 204.6,31.5 207.0,30.9 208.3,33.3 210.6,29.5 212.4,32.0 214.3,30.8 216.2,29.4 217.4,33.1 219.5,32.1 221.1,28.4 222.7,29.7 224.8,29.7 226.4,30.2 227.8,30.3 229.8,33.0 231.4,36.4 233.1,31.2 234.8,30.4 236.6,33.0 238.0,28.5 240.0,29.8 242.1,31.7 243.5,28.1 245.3,38.7 247.2,29.1 249.0,29.3 250.2,32.1 251.6,30.3 253.9,36.1 256.1,30.5 258.1,33.4 260.5,32.9 262.5,30.8 264.4,32.9 266.2,29.4 268.1,32.2 270.1,34.9 271.6,29.8 273.0,29.3 275.0,28.4 276.9,30.3 278.6,33.0 280.6,32.7 282.3,28.0 284.4,32.7 286.1,32.1 288.0,29.2 289.7,28.2 291.7,30.2 293.5,28.7 294.7,30.2 296.0,31.5 297.7,28.3 299.2,29.8 300.8,32.1 302.3,35.1 304.7,29.9 306.9,28.7 309.2,24.6 310.6,22.9 312.0,21.6 313.4,20.8 314.8,20.5 316.1,20.6 318.1,21.7 320.2,23.8 322.1,26.7 324.3,31.3 326.7,32.3 328.4,30.0 330.0,32.7 331.4,33.3 333.6,31.9 335.6,33.3 337.8,31.0 339.5,32.0 341.8,41.0 343.2,30.6 344.9,28.2 346.3,29.2 347.9,32.8 349.5,28.1 350.8,32.0 352.9,31.8 354.7,37.5 356.7,29.7 358.5,30.9 360.6,29.8 362.1,29.4 363.5,28.7 365.6,29.0 367.4,32.0 369.2,29.6 370.7,29.3 371.9,30.9 374.3,31.0 375.6,32.8 377.9,31.2 379.6,37.7 381.4,32.5 382.6,36.2 384.5,29.7 385.9,32.2 388.0,29.2 389.8,30.4 392.1,29.7 394.1,32.1 395.5,29.2 396.9,33.0 398.6,31.3 400.1,31.9 401.9,31.8 404.0,31.4 406.3,30.3 408.3,33.0 409.6,28.9 411.7,31.1 413.0,31.8 415.4,30.8 416.7,28.2 418.3,38.2 420.5,31.2 422.9,31.7 424.1,32.2 426.1,33.0 428.0,31.5 429.3,29.9 431.3,32.7 433.3,29.6 435.5,31.0 437.1,29.8 438.8,30.8 440.8,31.0 442.2,30.0 444.1,32.2 446.0,33.1 448.0,28.7 450.0,29.3 451.8,40.0 454.1,30.5 456.3,30.7 458.1,29.5 460.5,29.3 462.2,33.1 464.4,32.8 466.6,30.3 468.4,32.5 469.9,31.2 471.7,28.8 473.3,31.0 475.1,29.8 477.1,31.1 479.3,28.2 481.3,26.0 483.3,23.2 485.1,21.5 487.0,20.6 488.7,20.6 490.8,21.5 492.2,22.7 493.8,24.6 496.0,28.4 497.7,29.7 499.8,37.1 501.7,33.1 503.8,37.6 506.1,30.4 508.4,28.3 509.9,30.1 511.8,31.1 513.2,28.4 515.1,29.3 516.5,30.5 518.0,28.1 520.3,31.7 522.0,29.9 524.0,30.3 526.2,29.1 528.0,29.3 529.8,33.5 532.2,31.6 534.1,31.8 535.4,31.3 537.6,29.6 539.6,29.9 541.5,31.7 543.5,32.6 545.8,31.6 547.5,31.2 548.8,29.6 550.2,28.7 552.6,30.9 554.8,29.4 556.6,32.4 558.2,28.6 559.6,33.3 561.6,33.4 563.8,30.0 565.0,31.0 567.0,31.7 569.2,33.2 570.7,28.1 572.6,33.0 573.8,32.5 575.4,30.2 577.7,29.7 579.0,32.9 580.8,31.7 583.1,30.3 584.5,36.7 586.2,39.1 587.9,33.2 589.3,31.8 591.6,30.0 593.1,28.7 594.8,31.6 596.7,28.1 598.2,28.7 599.5,32.2 600.9,32.8 602.3,41.2 603.7,28.7 605.1,35.7 607.3,29.3 608.7,28.3 610.5,32.1 612.6,30.8 614.4,41.1 616.7,30.9 619.0,28.3 620.7,31.8 623.0,35.4 624.3,29.5 626.1,29.8 628.0,30.5 629.3,31.9 631.3,32.2 632.7,30.5 634.3,30.5 635.7,30.3 637.3,28.8 638.6,37.1 640.7,32.5 642.6,31.1 643.9,29.9 646.0,32.8 648.4,31.3 650.3,29.2 651.8,28.6 653.4,32.2 655.6,32.6 657.7,31.4 659.0,33.1 660.5,29.0 662.1,38.2 663.9,30.2 665.9,28.2 667.4,30.3 669.0,32.0 670.9,33.3 672.8,31.7 674.8,30.7 676.4,32.2 678.1,29.6 679.9,37.6 681.8,28.0 683.2,28.8 684.8,28.0 686.2,30.1 688.0,32.6 689.3,36.8 691.6,32.7 693.5,31.9 694.8,28.1 697.0,31.4 699.3,28.5 700.8,31.2 702.5,29.7 704.1,28.9 705.4,30.8 707.0,32.0 709.2,29.3 710.7,31.3 712.6,29.0 714.4,32.1 716.2,33.1 718.1,31.4 720.1,35.0 721.6,36.0 723.2,38.6 724.5,32.8 726.5,30.8 728.3,32.4 730.1,32.5 731.6,30.6 732.9,28.6 734.5,31.9 735.9,29.4 737.7,30.9 739.3,29.6 740.9,31.3 742.9,35.8 744.4,32.0 746.7,32.8 748.6,28.8 751.0,31.8 752.9,33.2 754.5,32.4 756.6,32.6 758.6,30.9 760.3,30.0 761.7,29.2 763.5,29.2 764.8,32.6 766.9,32.6 768.1,29.9 769.5,30.1 771.7,32.2 773.1,30.4 775.1,29.3 776.7,32.1 778.5,29.7 780.3,32.6 782.6,33.4 784.1,30.1 786.5,32.5 787.9,29.4 790.1,31.0 792.3,32.7 794.4,29.5 795.8,30.4 797.3,30.5 798.5,28.3 800.0,33.5 801.2,33.1 803.2,32.4 804.8,32.6 806.1,31.9 807.3,28.4 809.5,31.0 811.4,28.6 812.9,28.3 815.1,30.5 817.4,37.9 818.9,28.8 820.8,29.3 822.8,28.5 824.1,30.9 826.5,31.0 828.2,31.5 829.7,28.1 831.3,32.0 833.5,32.0 834.7,31.0 836.1,32.3 838.2,31.5 839.4,32.3 841.0,28.2 842.2,33.1 844.6,31.0 846.7,29.1 848.9,32.8 850.2,30.0 852.3,32.9 854.7,30.7 857.0,30.9 859.1,28.4 861.2,31.0 862.5,31.6 864.5,30.3 866.1,28.2 867.7,33.5 870.1,40.4 871.7,32.4 874.1,28.8 876.2,36.1 877.8,30.1 879.8,31.7 881.4,32.2 883.2,30.2 884.7,28.6 886.5,30.1 888.1,29.4 890.5,29.6 892.2,28.7 894.0,32.9 895.3,31.8 896.9,36.6 899.1,32.7 901.5,31.5 903.3,28.7 904.6,39.1 906.3,32.4 908.2,28.5 910.6,32.0 912.7,41.4 914.7,30.5 916.3,32.8 918.3,29.0 920.0,37.6 921.4,28.9 923.4,29.9 925.7,32.7 927.7,31.0 929.2,30.9 930.6,33.2 932.6,32.0 934.8,31.1 936.1,28.3 938.0,31.6 939.7,31.5 941.6,29.6 943.4,32.4 945.0,34.6 946.7,29.1 948.3,32.0 950.5,33.4 952.2,31.1 954.0,29.5 955.3,29.6 957.2,29.4 958.6,29.8 960.2,32.2 962.0,30.7 963.2,33.2 965.6,29.2 966.8,30.7 968.8,30.6 971.0,30.4 973.1,32.2 974.8,31.1 976.7,28.4 978.8,29.5 980.8,28.7 982.5,32.4 984.8,32.2 986.6,35.4 988.2,30.6 990.1,30.8 992.1,28.9 994.2,29.6 996.3,30.9 997.9,32.5 999.9,33.4 1002.1,32.0 1003.3,30.6 1005.4,32.3 1007.5,31.2 1009.5,31.4 1010.8,40.5 1012.2,28.1 1013.6,31.8 1015.7,33.1 1017.8,28.3 1019.2,29.8 1021.0,29.7 1023.3,29.9 1025.5,32.0 1027.5,31.4 1029.0,31.1 1031.4,29.6 1032.8,31.9 1034.4,33.1 1036.0,28.7 1037.6,33.4 1040.0,32.4 1041.5,31.9 1043.2,29.4 1044.7,31.0 1046.7,28.8 1048.6,29.3 1050.5,37.6 1052.5,28.6 1053.7,31.0 1055.4,33.1 1057.2,29.1 1058.8,31.6 1060.1,31.2 1062.1,33.2 1063.6,32.9 1065.9,33.5 1067.7,33.2 1070.0,39.7 1071.3,33.4 1073.7,31.0 1076.0,32.7 1077.4,28.6 1079.2,29.4 1081.3,32.3 1083.4,29.0 1085.7,32.5 1087.0,31.7 1088.3,29.8 1089.8,29.3 1092.2,29.7 1093.4,31.6 1094.7,28.7 1096.4,30.8 1098.4,29.7 1100.7,29.6 1102.2,28.7 1104.3,31.3 1106.1,30.6 1108.1,29.2 1110.2,39.0 1112.3,28.4 1113.5,31.0 1115.4,28.8 1117.3,28.6 1119.2,28.5 1121.3,30.5 1123.1,28.3 1125.2,32.0 1127.4,32.1 1128.7,38.9 1131.0,28.4 1132.2,30.2 1134.4,33.4 1136.1,33.5 1138.3,33.0 1140.3,31.6 1142.3,29.9 1144.2,30.9 1145.6,33.5 1147.6,31.0 1149.8,29.4 1151.3,33.2 1152.7,32.5 1154.8,37.9 1156.1,28.2 1158.2,28.3 1159.9,29.3 1162.1,28.3 1163.6,32.5 1165.2,31.3 1166.8,29.7 1168.8,29.2 1170.1,33.2 1172.4,31.4 1174.2,33.3 1176.2,32.3 1177.9,28.8 1180.0,30.6 1181.5,31.9 1183.8,31.1 1185.7,28.7 1187.1,31.6 1189.4,28.5 1190.8,29.5 1192.7,32.8 1194.8,32.0 1196.6,32.8 1198.9,28.1 1201.3,28.6 1203.1,29.3 1204.5,33.0 1206.6,30.1 1208.3,29.4 1210.1,28.5 1211.8,32.6 1213.5,30.3 1215.0,28.8 1217.3,31.2 1218.7,29.8 1220.9,30.7 1222.9,29.4 1225.2,31.5 1226.6,32.4 1228.7,30.7 1230.6,35.7 1232.8,33.2 1234.9,30.3 1236.4,38.4 1238.0,31.4 1240.0,30.7 1241.2,37.7 1242.7,41.4 1244.7,32.4 1246.0,28.5 1247.5,30.9 1249.0,30.2 1250.7,31.1 1252.1,31.8 1254.1,32.7 1255.4,30.1 1256.7,28.1 1258.5,30.4 1260.4,39.4 1261.6,29.2 1263.9,35.0 1266.2,32.9 1267.4,33.1 1269.8,31.2 1271.9,35.0 1273.3,32.6 1275.6,29.8 1277.0,33.4 1278.8,39.5 1281.0,29.9 1283.3,30.2 1284.6,29.5 1286.4,30.0 1288.1,31.7 1289.4,31.4 1291.4,28.5 1293.5,31.5 1295.1,34.1 1296.7,29.5 1298.1,30.5 1299.8,28.1 1301.1,31.3 1302.8,29.6 1304.1,33.0 1306.5,31.1 1308.1,28.8 1309.9,28.3 1311.6,35.9 1313.1,31.4 1314.6,28.6 1316.9,29.8 1319.1,29.8 1321.2,32.7 1322.6,29.8 1324.0,29.7 1326.4,29.6 1328.2,31.2 1329.8,32.5 1331.2,31.1 1333.0,31.7 1335.4,30.5 1337.1,29.6 1339.3,32.4 1341.1,31.5 1343.1,31.9 1344.4,33.4 1346.0,30.8 1348.1,31.0 1349.7,32.9 1351.7,28.5 1353.7,30.0 1354.9,33.4 1356.6,32.1 1358.3,28.1 1360.1,30.9 1362.0,30.5 1364.1,31.2 1365.8,28.1 1367.5,33.3 1369.8,28.8 1371.5,29.1 1373.3,30.4 1374.9,29.7 1376.2,32.7 1378.2,28.9 1379.7,29.0 1381.6,33.3 1383.3,29.0 1385.0,28.2 1386.4,31.3 1388.5,29.1 1390.7,28.3 1392.9,29.0 1394.7,29.4 1396.5,31.5 1398.4,31.2 1400.6,31.4 1402.7,29.6 1404.0,28.7 1405.6,29.0 1407.4,30.3 1409.0,29.0 1411.1,31.5 1412.9,30.7 1414.5,36.3 1415.7,28.8 1418.1,30.8 1420.1,30.3 1421.9,36.3 1423.4,29.5 1424.8,30.5 1426.9,31.0 1428.3,32.3 1429.9,40.1 1431.8,33.4 1434.0,32.1 1436.4,30.5 1438.6,30.4 1440.7,29.3 1442.6,30.1 1444.6,29.1 1446.0,35.2 1447.5,31.4 1449.6,30.1 1451.8,34.0 1453.1,34.0 1455.4,34.3 1456.8,33.6 1458.8,33.5 1460.8,31.8 1462.4,31.4 1464.3,40.7 1465.9,34.5 1468.2,39.1 1470.3,33.6 1472.3,38.3 1473.7,32.1 1475.3,34.4 1477.2,33.0 1478.8,38.3 1480.9,32.6 1483.1,41.4 1484.6,34.1 1486.6,31.3 1488.1,34.1 1489.7,35.5 1491.4,32.3 1492.9,34.3 1494.1,33.4 1495.6,42.1 1497.7,36.4 1499.1,31.4 1501.2,31.7 1503.4,32.0 1505.5,32.1 1506.9,41.6 1508.6,35.5 1510.0,33.9 1512.3,32.2 1514.4,35.1 1516.7,33.7 1518.2,32.5 1520.2,35.5 1522.2,36.9 1523.8,35.2 1525.9,42.5 1528.2,35.3 1530.0,35.9 1532.4,38.2 1533.7,37.6 1535.4,36.7 1537.7,41.6 1539.2,41.3 1541.0,36.7 1542.7,43.8 1544.7,34.9 1546.5,34.6 1548.3,35.7 1550.5,44.9 1552.6,42.9 1554.3,36.4 1555.9,38.1 1557.2,37.9 1558.6,39.4 1560.8,38.2 1562.1,38.6 1564.4,46.7 1565.9,34.9 1567.8,35.0 1569.4,37.4 1571.1,36.2 1573.0,38.8 1574.8,35.2 1576.3,37.6 1577.7,40.2 1579.5,40.2 1581.2,37.1 1583.3,42.8 1585.1,40.4 1587.3,41.0 1588.5,38.2 1590.8,37.6 1592.0,36.9 1593.5,39.3" fill="none" stroke="#40dc40" stroke-width="1"/></svg>
<div style="left:792.5px;top:657px;width:1.2px;height:196px;background:#d82030"></div>
<div style="left:817px;top:657px;width:1.2px;height:196px;background:#d82030"></div>
<div style="left:882.5px;top:657px;width:1px;height:196px;background:#30c040"></div>
<div style="left:907px;top:657px;width:1px;height:196px;background:#30c040"></div>
<div style="left:1597px;top:633px;width:3px;height:220px;background:#f0f0f0"></div>
<div style="left:0px;top:853px;width:1600px;height:5px;background:#ececec"></div>
<div style="left:484px;top:853px;width:566px;height:5px;background:#958a80"></div>
<div style="left:1050px;top:853px;width:47px;height:5px;background:#6e6e66"></div>
<div style="left:0px;top:858px;width:1600px;height:42px;background:#dae1ea"></div>
<svg style="position:absolute;left:16px;top:871px" width="18" height="17" viewBox="0 0 18 17"><path d="M0 2.4 L7.3 1.4 L7.3 8 L0 8 Z M8.2 1.3 L18 0 L18 8 L8.2 8 Z M0 9 L7.3 9 L7.3 15.6 L0 14.6 Z M8.2 9 L18 9 L18 17 L8.2 15.7 Z" fill="#111"/></svg>
<div style="left:51px;top:858px;width:356.5px;height:42px;background:#fff"></div>
<svg style="position:absolute;left:62px;top:870px" width="18" height="18" viewBox="0 0 18 18"><circle cx="11" cy="7" r="5.6" fill="none" stroke="#222" stroke-width="1.4"/><path d="M7 11 L1 17" stroke="#222" stroke-width="1.6"/></svg>
<div class="t" style="left:91.5px;top:879.5px;font-size:15.3px;color:#333">Escribe aquí para buscar</div>
<svg style="position:absolute;left:425px;top:870px" width="18" height="17" viewBox="0 0 18 17"><path d="M1 1.5 H11 M1 15.5 H11" stroke="#222" stroke-width="1.4"/><rect x="2" y="4" width="8" height="9" fill="none" stroke="#222" stroke-width="1.3"/><path d="M15 0 V17" stroke="#222" stroke-width="1.3"/><rect x="13.8" y="5.5" width="2.4" height="3.5" fill="#222"/></svg>
<svg style="position:absolute;left:474px;top:866.5px" width="25.5" height="25.5" viewBox="0 0 26 26"><defs><linearGradient id="eg1" x1="0" y1="0" x2="1" y2="0.5"><stop offset="0" stop-color="#1890e0"/><stop offset="0.45" stop-color="#20b4c8"/><stop offset="1" stop-color="#50dc60"/></linearGradient><linearGradient id="eg2" x1="0" y1="0" x2="0.3" y2="1"><stop offset="0" stop-color="#1a7ad8"/><stop offset="1" stop-color="#0c4ea0"/></linearGradient></defs><circle cx="13" cy="13" r="12.5" fill="url(#eg1)"/><path d="M0.6 11 Q0.5 25.5 13 25.5 Q20.5 25.5 23.5 19.5 Q18 21.5 13.5 19.5 Q7.5 16.5 8.5 11.5 Q10 7 15 8 Q9 3.5 3 7.5 Q1 9 0.6 11 Z" fill="url(#eg2)"/><path d="M26 14.5 L26 26 L15 26 Q21.5 25 24 19 Q25.2 16.5 26 14.5 Z" fill="#dae1ea"/><path d="M10.2 13.6 Q10.6 17.4 15 18 Q20 18.6 25 16.6 L25 17.8 Q19.5 20.6 14.5 19.6 Q8.9 18.2 9.2 13.2 Z" fill="#dae1ea"/><circle cx="12.9" cy="13.4" r="2.7" fill="#dae1ea"/></svg>
<svg style="position:absolute;left:527px;top:867.5px" width="23" height="23" viewBox="0 0 24 24"><circle cx="12" cy="12" r="11.5" fill="#dd4433"/><path d="M12 12 L2.1 6.3 A11.5 11.5 0 0 0 12 23.5 Z" fill="#22a050"/><path d="M12 12 L12 23.5 A11.5 11.5 0 0 0 21.9 6.3 Z" fill="#f8c020"/><circle cx="12" cy="12" r="5.2" fill="#fff"/><circle cx="12" cy="12" r="4" fill="#4a88ee"/></svg>
<svg style="position:absolute;left:578px;top:868.5px" width="24" height="19" viewBox="0 0 24 19"><rect x="0" y="2" width="10" height="3" fill="#d8a020"/><rect x="0" y="3.5" width="24" height="15.5" fill="#f8d060"/><path d="M5 19 V10 H19 V19 H15 V13.5 H9 V19 Z" fill="#3a8ed0"/></svg>
<svg style="position:absolute;left:632px;top:867px" width="20" height="24" viewBox="0 0 20 24"><rect width="20" height="24" fill="#56606a"/><rect x="2" y="2" width="16" height="4" fill="#5cc8f0"/><g fill="#e8eef4"><rect x="2" y="8" width="4" height="3.5"/><rect x="8" y="8" width="4" height="3.5"/><rect x="14" y="8" width="4" height="3.5"/><rect x="2" y="13" width="4" height="3.5"/><rect x="8" y="13" width="4" height="3.5"/><rect x="2" y="18" width="4" height="3.5"/><rect x="8" y="18" width="4" height="3.5"/></g><rect x="14" y="13" width="4" height="8.5" fill="#2860b0"/></svg>
<svg style="position:absolute;left:680px;top:866px" width="38" height="30" viewBox="0 0 38 30"><path d="M1 9 L13.5 1 L26 9 V21 H1 Z" fill="#1c6cc8"/><path d="M1 9 H26 L13.5 17 Z" fill="#e8f4ff"/><path d="M1 11 L13.5 19 L26 11 V21 H1 Z" fill="#36a0f0"/><circle cx="26.5" cy="20" r="9.5" fill="#e2e2e2" stroke="#444" stroke-width="1"/><text x="26.5" y="24.5" font-family="Liberation Sans" font-size="12.5" text-anchor="middle" fill="#111">55</text></svg>
<svg style="position:absolute;left:734px;top:867px" width="23" height="23" viewBox="0 0 23 23"><rect x="0" y="2" width="23" height="21" fill="#1a78d8"/><rect x="1.5" y="8" width="20" height="13.5" fill="#2a8ae8"/><rect x="4" y="0" width="2" height="4" fill="#1a78d8"/><rect x="17" y="0" width="2" height="4" fill="#1a78d8"/><g fill="#fff"><rect x="4" y="10" width="2.5" height="2.2"/><rect x="8.5" y="10" width="2.5" height="2.2"/><rect x="13" y="10" width="2.5" height="2.2"/><rect x="17" y="10" width="2.5" height="2.2"/><rect x="4" y="14" width="2.5" height="2.2"/><rect x="8.5" y="14" width="2.5" height="2.2"/><rect x="13" y="14" width="2.5" height="2.2"/><rect x="17" y="14" width="2.5" height="2.2"/><rect x="4" y="18" width="2.5" height="2.2"/><rect x="8.5" y="18" width="2.5" height="2.2"/><rect x="13" y="18" width="2.5" height="2.2"/></g></svg>
<svg style="position:absolute;left:786px;top:870px" width="22" height="17" viewBox="0 0 22 17"><path d="M1 9 L5 5.5 L9 9.5 L18 1 L21 4.5 L9 16 Z" fill="#3a7ed8"/><path d="M9 9.5 L18 1 L21 4.5 L11 14 Z" fill="#5aa0f0"/></svg>
<div style="left:823px;top:858px;width:48px;height:42px;background:#edf0f7"></div>
<svg style="position:absolute;left:837px;top:867px" width="23" height="23" viewBox="0 0 20 20"><path d="M11.6 7.1 L15 5 L12.9 8.4 Z M12.9 11.6 L15 15 L11.6 12.9 Z M8.4 12.9 L5 15 L7.1 11.6 Z M7.1 8.4 L5 5 L8.4 7.1 Z" fill="#1212a0"/><path d="M10 0 L12 8 L10 10 Z M20 10 L12 12 L10 10 Z M10 20 L8 12 L10 10 Z M0 10 L8 8 L10 10 Z" fill="#1212a0"/><path d="M10 0 L8 8 L10 10 Z M20 10 L12 8 L10 10 Z M10 20 L12 12 L10 10 Z M0 10 L8 12 L10 10 Z" fill="#5a5ae6"/></svg>
<div style="left:517px;top:897px;width:43px;height:3px;background:#2a76c8"></div>
<div style="left:569px;top:897px;width:43px;height:3px;background:#2a76c8"></div>
<div style="left:620px;top:897px;width:43px;height:3px;background:#2a76c8"></div>
<div style="left:823.5px;top:897px;width:51.0px;height:3px;background:#2a76c8"></div>
<svg style="position:absolute;left:1170.5px;top:871px" width="18" height="17" viewBox="0 0 18 17"><rect width="18" height="17" rx="1" fill="#1c2220"/><path d="M1.5 8.5 Q5 2.5 12 2.8 L16.5 3 L16.5 14 L12 14.2 Q5 14.5 1.5 8.5 Z" fill="#6aa81e"/><path d="M4.5 8.5 Q7 5 11 5.5 Q14 6.5 13.5 9 Q12.5 11.5 9.5 11.5 Q7 11 7.5 8.8" fill="none" stroke="#2a3a18" stroke-width="1.2"/><path d="M3 8.5 Q6.5 4 12 4" fill="none" stroke="#9ad040" stroke-width="0.8"/></svg>
<svg style="position:absolute;left:1204.5px;top:871px" width="16" height="16" viewBox="0 0 24 24"><circle cx="12" cy="12" r="11.5" fill="#dd4433"/><path d="M12 12 L2.1 6.3 A11.5 11.5 0 0 0 12 23.5 Z" fill="#22a050"/><path d="M12 12 L12 23.5 A11.5 11.5 0 0 0 21.9 6.3 Z" fill="#f8c020"/><circle cx="12" cy="12" r="5.2" fill="#fff"/><circle cx="12" cy="12" r="4" fill="#4a88ee"/></svg>
<svg style="position:absolute;left:1236px;top:870px" width="19" height="18" viewBox="0 0 19 18"><path d="M9.5 4.5 Q12 1 15.5 1.5 Q18.5 3 16 6.5 L14.5 9 Q18 12 17 15 Q15 17.5 12 15 L9.5 13 Q6 16.5 3.5 15.5 Q1.5 14 3.5 11 L5 9 Q0.5 7.5 1 5 Q2 2.5 5 3.5 Z" fill="#f27a1e"/><circle cx="9.6" cy="9" r="3" fill="#f8e0c8"/><circle cx="9.6" cy="9" r="1.6" fill="#f27a1e"/></svg>
<svg style="position:absolute;left:1271px;top:871px" width="17" height="16" viewBox="0 0 17 16"><path d="M1.5 15 A13.5 13.5 0 0 1 15 1.5 M5 15 A10 10 0 0 1 15 5 M8.5 15 A6.5 6.5 0 0 1 15 8.5" fill="none" stroke="#2a2a2a" stroke-width="1.4"/><circle cx="14" cy="14" r="1.6" fill="#222"/></svg>
<svg style="position:absolute;left:1303px;top:872px" width="19" height="16" viewBox="0 0 19 16"><path d="M1 5 H4 L8 1.5 V14.5 L4 11 H1 Z" fill="none" stroke="#222" stroke-width="1.1"/><path d="M11 6 Q12 8 11 10 M13.5 3.5 Q15.8 8 13.5 12.5 M16 1 Q19.5 8 16 15" fill="none" stroke="#222" stroke-width="1.1"/></svg>
<svg style="position:absolute;left:1339.5px;top:870px" width="12" height="19" viewBox="0 0 12 19"><rect x="2.3" y="0.7" width="7.4" height="12" rx="1.2" fill="#111"/><path d="M0.8 8.5 V11 Q0.8 14.5 6 14.5 Q11.2 14.5 11.2 11 V8.5 M6 14.5 V17.5 M3.5 17.8 H8.5" fill="none" stroke="#222" stroke-width="1.1"/></svg>
<svg style="position:absolute;left:1370px;top:873px" width="18" height="12" viewBox="0 0 18 12"><rect x="4" y="2" width="13" height="9" fill="none" stroke="#222" stroke-width="1.1"/><rect x="5.5" y="3.5" width="10" height="6" fill="#111"/><circle cx="1.6" cy="3" r="1.3" fill="none" stroke="#222" stroke-width="0.9"/><path d="M1.6 0 V1.7 M1.6 4.3 V11 H4" fill="none" stroke="#222" stroke-width="0.9"/></svg>
<svg style="position:absolute;left:1407px;top:870px" width="19" height="18" viewBox="0 0 19 18"><path d="M13.2 1 L16 2.6 L8.6 15.6 L5.8 14 Z" fill="none" stroke="#222" stroke-width="1.2"/><path d="M6.5 16.8 Q1.2 17.2 1.4 13.4 Q2 9.8 7.5 10.4 M11 10.6 Q14.5 10.9 16.5 10.3 Q18.6 9.4 17.6 7.4" fill="none" stroke="#222" stroke-width="1.2"/></svg>
<div class="t" style="left:1456px;top:879.5px;font-size:12.5px;color:#2c2c2c;transform:translate(-50%,-50%)">ENG</div>
<div class="t" style="left:1509.5px;top:870px;font-size:12.5px;color:#2c2c2c;transform:translate(-50%,-50%)">14:38</div>
<div class="t" style="left:1509.5px;top:888.5px;font-size:12.5px;color:#2c2c2c;transform:translate(-50%,-50%)">4/1/2021</div>
<svg style="position:absolute;left:1557px;top:870px" width="26" height="26" viewBox="0 0 26 26"><path d="M1 1 H17 V13 H6 L1 17 Z" fill="#111"/><path d="M4 4.5 H14 M4 7.5 H14 M4 10.5 H11" stroke="#dae1ea" stroke-width="1.1"/><circle cx="16.5" cy="16.5" r="7.5" fill="#e4e4e4" stroke="#555" stroke-width="1"/><text x="16.5" y="20.5" font-family="Liberation Sans" font-size="11" text-anchor="middle" fill="#111">19</text></svg>
<div style="left:1595px;top:858px;width:1px;height:42px;background:#b8bec6"></div>
</body></html>
